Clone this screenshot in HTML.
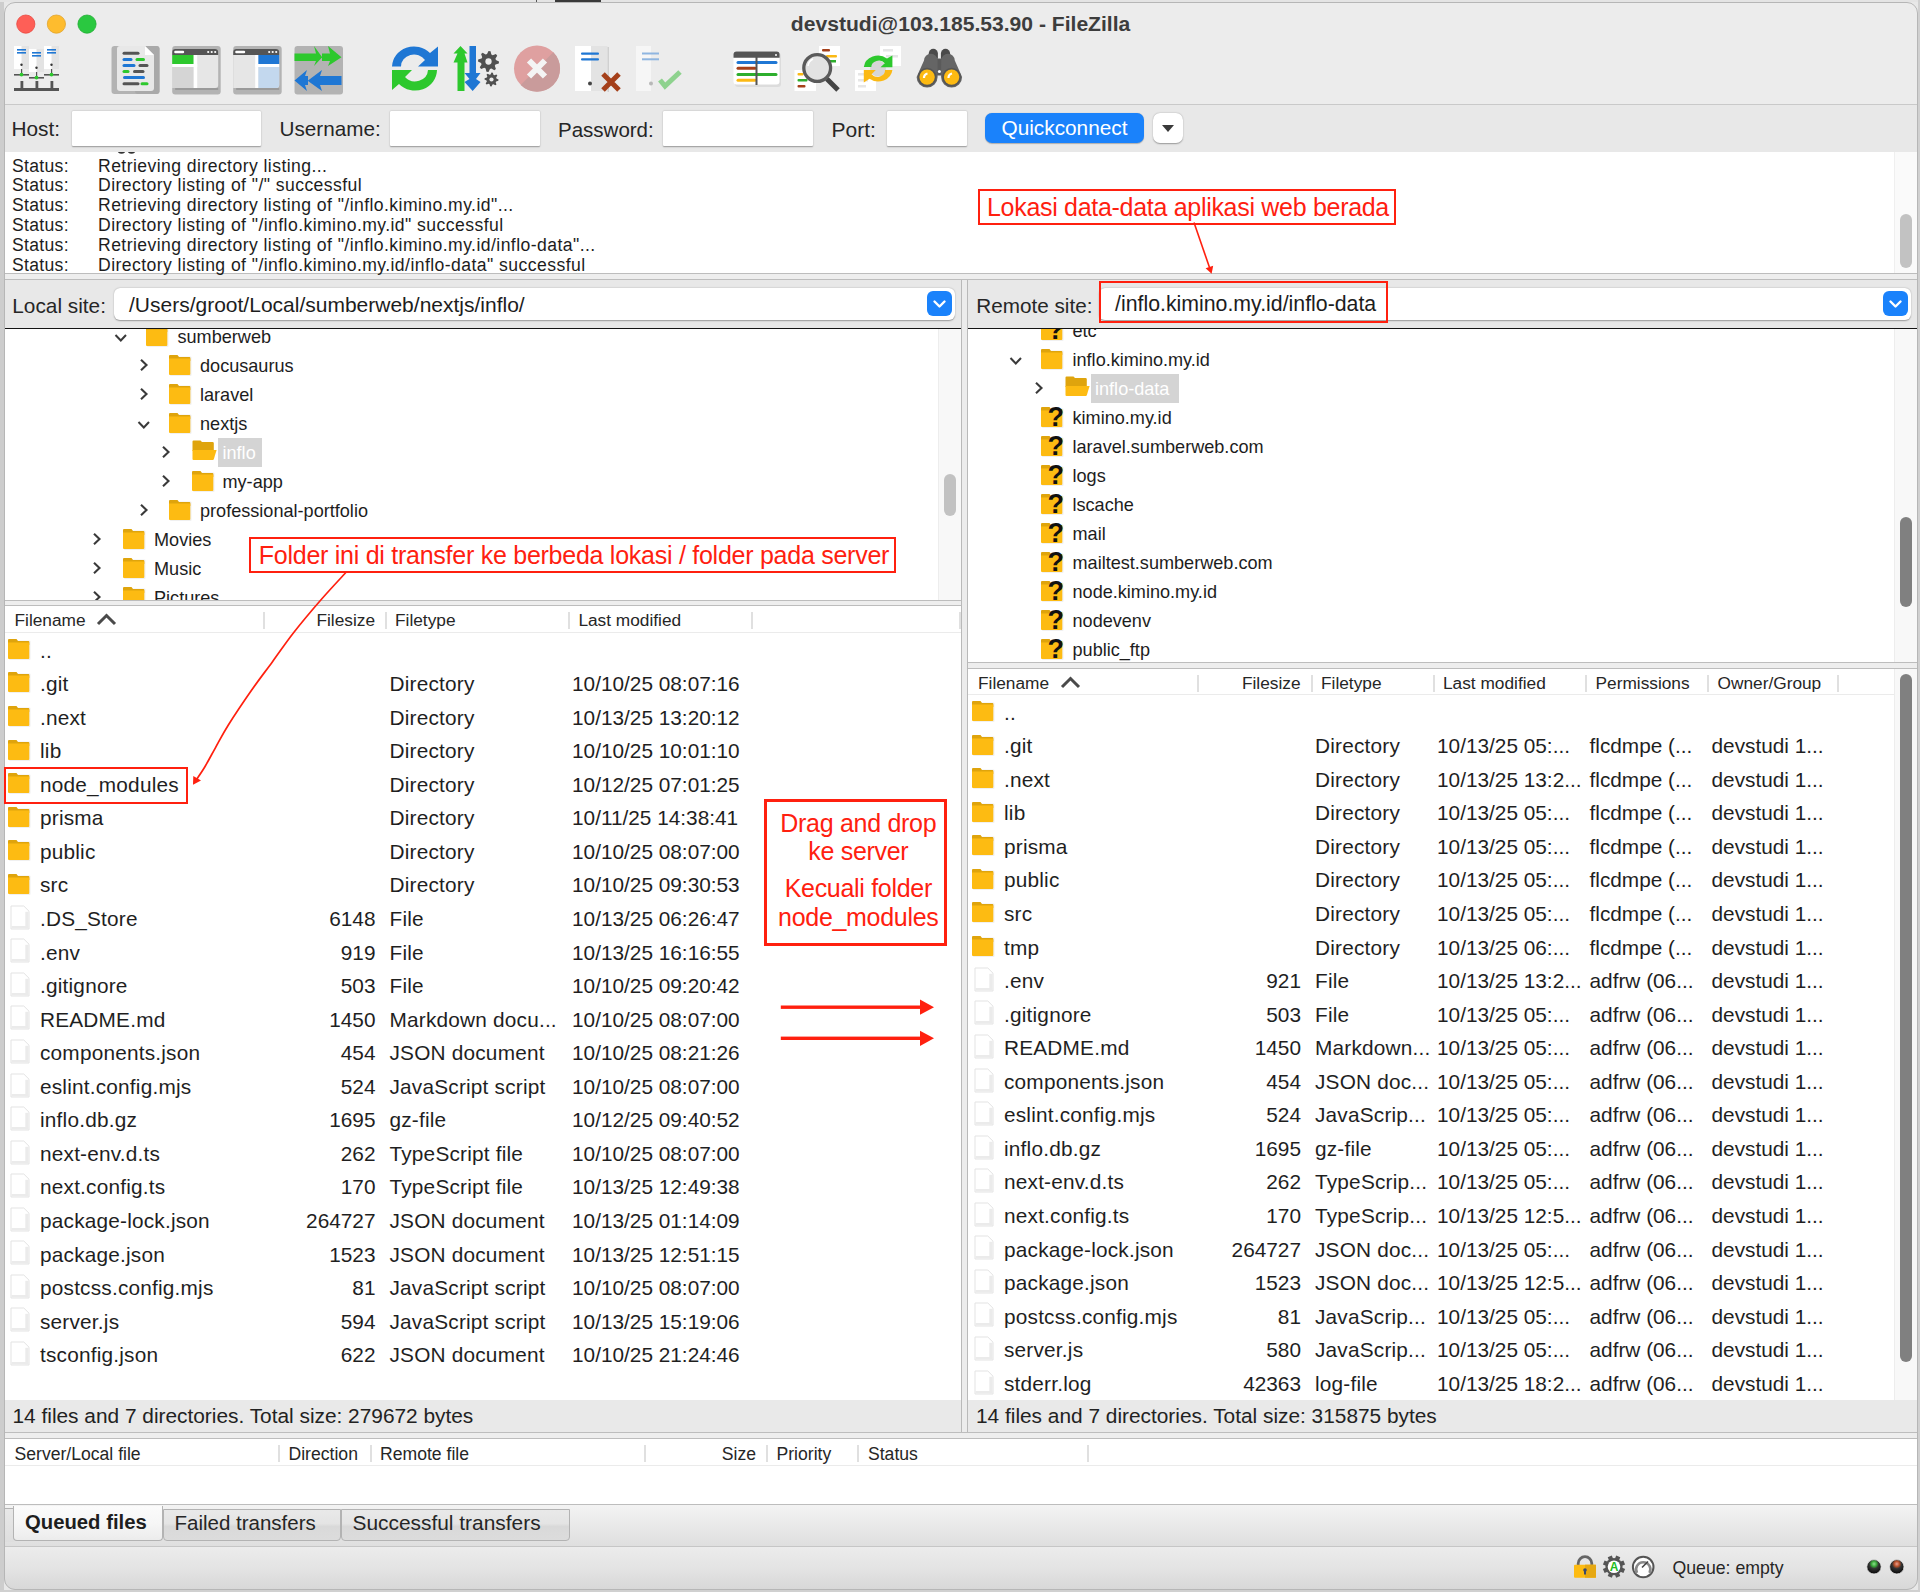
<!DOCTYPE html>
<html><head><meta charset="utf-8"><title>FileZilla</title>
<style>
html,body{margin:0;padding:0}
body{width:1920px;height:1592px;position:relative;overflow:hidden;background:#e9e9e9;font-family:"Liberation Sans", sans-serif;}
div,svg{box-sizing:border-box}
</style></head><body>
<div style="position:absolute;left:0px;top:0px;width:1920px;height:1592px;background:#ebebeb"></div><div style="position:absolute;left:4px;top:2px;width:1914px;height:1588px;border-radius:11px;overflow:hidden;background:#ececec"><div style="position:absolute;left:-4px;top:-2px;width:1920px;height:1592px"><div style="position:absolute;left:0px;top:0px;width:1920px;height:104px;background:#ececec"></div><div style="position:absolute;left:0px;top:104px;width:1920px;height:1px;background:#c9c9c9"></div><div style="position:absolute;left:0px;top:105px;width:1920px;height:47px;background:#e8e8e8"></div><div style="position:absolute;left:5px;top:152px;width:1912px;height:121px;background:#fff"></div><div style="position:absolute;left:1894px;top:152px;width:23px;height:121px;background:#fafafa;border-left:1px solid #efefef"></div><div style="position:absolute;left:1900px;top:214px;width:12px;height:54px;background:#c2c2c2;border-radius:6px"></div><div style="position:absolute;left:0px;top:273px;width:1920px;height:1px;background:#bdbdbd"></div><div style="position:absolute;left:0px;top:274px;width:1920px;height:5px;background:#eeeeee"></div><div style="position:absolute;left:0px;top:279px;width:1920px;height:1px;background:#bdbdbd"></div><div style="position:absolute;left:0px;top:280px;width:1920px;height:48px;background:#e8e8e8"></div><div style="position:absolute;left:0px;top:328px;width:1920px;height:1px;background:#141414"></div><div style="position:absolute;left:961px;top:280px;width:1px;height:1152px;background:#b9b9b9"></div><div style="position:absolute;left:962px;top:280px;width:5px;height:1152px;background:#ececec"></div><div style="position:absolute;left:967px;top:280px;width:1px;height:1152px;background:#b9b9b9"></div><div style="position:absolute;left:5px;top:329px;width:956px;height:271px;background:#fff"></div><div style="position:absolute;left:938px;top:329px;width:23px;height:271px;background:#f8f8f8;border-left:1px solid #ededed"></div><div style="position:absolute;left:944px;top:474px;width:12px;height:42px;background:#c2c2c2;border-radius:6px"></div><div style="position:absolute;left:0px;top:600px;width:961px;height:1px;background:#bdbdbd"></div><div style="position:absolute;left:0px;top:601px;width:961px;height:4px;background:#eeeeee"></div><div style="position:absolute;left:0px;top:605px;width:961px;height:1px;background:#bdbdbd"></div><div style="position:absolute;left:5px;top:606px;width:956px;height:794px;background:#fff"></div><div style="position:absolute;left:5px;top:632px;width:956px;height:1px;background:#ebebeb"></div><div style="position:absolute;left:5px;top:1400px;width:956px;height:32px;background:#e9e9e9"></div><div style="position:absolute;left:968px;top:329px;width:949px;height:333px;background:#fff"></div><div style="position:absolute;left:1894px;top:329px;width:23px;height:333px;background:#f8f8f8;border-left:1px solid #ededed"></div><div style="position:absolute;left:1900px;top:517px;width:12px;height:90px;background:#808080;border-radius:6px"></div><div style="position:absolute;left:968px;top:662px;width:949px;height:1px;background:#bdbdbd"></div><div style="position:absolute;left:968px;top:663px;width:949px;height:5px;background:#eeeeee"></div><div style="position:absolute;left:968px;top:668px;width:949px;height:1px;background:#bdbdbd"></div><div style="position:absolute;left:968px;top:669px;width:949px;height:731px;background:#fff"></div><div style="position:absolute;left:968px;top:694px;width:926px;height:1px;background:#ebebeb"></div><div style="position:absolute;left:1894px;top:669px;width:23px;height:731px;background:#f8f8f8;border-left:1px solid #ededed"></div><div style="position:absolute;left:1900px;top:674px;width:12px;height:688px;background:#808080;border-radius:6px"></div><div style="position:absolute;left:968px;top:1400px;width:949px;height:32px;background:#e9e9e9"></div><div style="position:absolute;left:0px;top:1432px;width:1920px;height:1px;background:#bdbdbd"></div><div style="position:absolute;left:0px;top:1433px;width:1920px;height:5px;background:#eeeeee"></div><div style="position:absolute;left:0px;top:1438px;width:1920px;height:1px;background:#bdbdbd"></div><div style="position:absolute;left:5px;top:1439px;width:1912px;height:65px;background:#fff"></div><div style="position:absolute;left:5px;top:1465px;width:1912px;height:1px;background:#ebebeb"></div><div style="position:absolute;left:0px;top:1504px;width:1920px;height:1px;background:#bdbdbd"></div><div style="position:absolute;left:0px;top:1505px;width:1920px;height:42px;background:linear-gradient(#f4f4f4,#e9e9e9 30%,#dcdcdc)"></div><div style="position:absolute;left:0px;top:1546px;width:1920px;height:1px;background:#c4c4c4"></div><div style="position:absolute;left:0px;top:1547px;width:1920px;height:45px;background:linear-gradient(#ececec,#e3e3e3 50%,#d6d6d6)"></div></div></div><svg style="position:absolute;left:0px;top:0px" width="120" height="48" viewBox="0 0 120 48">
<circle cx="25.8" cy="24.1" r="9.1" fill="#fe5f57" stroke="#e9483f" stroke-width="0.8"/>
<circle cx="56.4" cy="24.1" r="9.1" fill="#febc2e" stroke="#e1a32a" stroke-width="0.8"/>
<circle cx="87.0" cy="24.1" r="9.1" fill="#2ac840" stroke="#22ad35" stroke-width="0.8"/>
</svg><div style="position:absolute;left:460.6px;width:1000px;top:11.04px;height:25.32px;line-height:25.32px;font-size:21.1px;color:#3d3d3d;font-weight:bold;white-space:pre;text-align:center;">devstudi@103.185.53.90 - FileZilla</div><svg style="position:absolute;left:0;top:0" width="1000" height="104" viewBox="0 0 1000 104"><rect x="14" y="46" width="15" height="23" fill="#ffffff"/><rect x="21.5" y="46" width="7.5" height="23" fill="#e3e3e3"/><rect x="17" y="49" width="9" height="1.6" fill="#1f77d4"/><rect x="17" y="52" width="9" height="1.6" fill="#1f77d4"/><circle cx="21.5" cy="64.7" r="1.2" fill="#333"/><rect x="21" y="69" width="1.2" height="5" fill="#555"/><rect x="14" y="74" width="15" height="1.6" fill="#555"/><circle cx="21.5" cy="74.6" r="1.9" fill="#2dc82d"/><rect x="29" y="49" width="15" height="23" fill="#ffffff"/><rect x="36.5" y="49" width="7.5" height="23" fill="#e3e3e3"/><rect x="32" y="52" width="9" height="1.6" fill="#1f77d4"/><rect x="32" y="55" width="9" height="1.6" fill="#1f77d4"/><circle cx="36.5" cy="67.7" r="1.2" fill="#333"/><rect x="36" y="72" width="1.2" height="5" fill="#555"/><rect x="29" y="77" width="15" height="1.6" fill="#555"/><circle cx="36.5" cy="77.6" r="1.9" fill="#2dc82d"/><rect x="44" y="46" width="15" height="23" fill="#ffffff"/><rect x="51.5" y="46" width="7.5" height="23" fill="#e3e3e3"/><rect x="47" y="49" width="9" height="1.6" fill="#1f77d4"/><rect x="47" y="52" width="9" height="1.6" fill="#1f77d4"/><circle cx="51.5" cy="64.7" r="1.2" fill="#333"/><rect x="51" y="69" width="1.2" height="5" fill="#555"/><rect x="44" y="74" width="15" height="1.6" fill="#555"/><circle cx="51.5" cy="74.6" r="1.9" fill="#2dc82d"/><rect x="20.5" y="81" width="2.8" height="8" fill="#555"/><rect x="35.5" y="81" width="2.8" height="8" fill="#555"/><rect x="50.5" y="81" width="2.8" height="8" fill="#555"/><rect x="14" y="88" width="45" height="3" fill="#555"/><rect x="111.5" y="46" width="48" height="48" rx="3" fill="#b3b3b3"/><rect x="135" y="46" width="24.5" height="48" rx="3" fill="#a9a9a9"/><path d="M117 49 Q117 46 120 46 L145 46 L154 55 L154 88 Q154 91 151 91 L120 91 Q117 91 117 88 Z" fill="#e8e8e8"/><path d="M145 46 L154 55 L145 55 Z" fill="#ffffff"/><line x1="124" y1="53.3" x2="138" y2="53.3" stroke="#555" stroke-width="3" stroke-linecap="round"/><line x1="124" y1="59.5" x2="131" y2="59.5" stroke="#1f77d4" stroke-width="3" stroke-linecap="round"/><line x1="137" y1="59.5" x2="143.5" y2="59.5" stroke="#2dc82d" stroke-width="3" stroke-linecap="round"/><line x1="124" y1="65.5" x2="134" y2="65.5" stroke="#1f77d4" stroke-width="3" stroke-linecap="round"/><line x1="140" y1="65.5" x2="147" y2="65.5" stroke="#555" stroke-width="3" stroke-linecap="round"/><line x1="124" y1="71.5" x2="128" y2="71.5" stroke="#2dc82d" stroke-width="3" stroke-linecap="round"/><line x1="134.5" y1="71.5" x2="143" y2="71.5" stroke="#555" stroke-width="3" stroke-linecap="round"/><line x1="124.5" y1="77.5" x2="143.5" y2="77.5" stroke="#1f77d4" stroke-width="3" stroke-linecap="round"/><line x1="124" y1="83.8" x2="138" y2="83.8" stroke="#555" stroke-width="3" stroke-linecap="round"/><line x1="142" y1="83.8" x2="147" y2="83.8" stroke="#2dc82d" stroke-width="3" stroke-linecap="round"/><rect x="172.2" y="46" width="48.5" height="48.5" rx="3" fill="#b3b3b3"/><path d="M172.2 52 Q172.2 49 175.2 49 L215.2 49 Q218.2 49 218.2 52 L218.2 85 Q218.2 88 215.2 88 L172.2 88 Z" fill="#e6e6e6"/><path d="M172.2 52 Q172.2 49 175.2 49 L215.2 49 Q218.2 49 218.2 52 L218.2 55 L172.2 55 Z" fill="#555"/><rect x="174.2" y="50.8" width="10" height="2.4" rx="1.2" fill="#fff"/><circle cx="208.2" cy="52" r="1.1" fill="#fff"/><circle cx="211.7" cy="52" r="1.1" fill="#fff"/><circle cx="215.2" cy="52" r="1.1" fill="#fff"/><rect x="172.2" y="55" width="21.5" height="9" fill="#2dc82d"/><rect x="172.2" y="64" width="25" height="3" fill="#fff"/><rect x="172.2" y="67" width="21.5" height="21" fill="#d5d5d5"/><rect x="193.7" y="55" width="3.5" height="33" fill="#fff"/><rect x="175.2" y="88" width="43" height="2" fill="#9a9a9a"/><rect x="233.2" y="46" width="48.5" height="48.5" rx="3" fill="#b3b3b3"/><path d="M233.2 52 Q233.2 49 236.2 49 L276.2 49 Q279.2 49 279.2 52 L279.2 85 Q279.2 88 276.2 88 L233.2 88 Z" fill="#e6e6e6"/><path d="M233.2 52 Q233.2 49 236.2 49 L276.2 49 Q279.2 49 279.2 52 L279.2 55 L233.2 55 Z" fill="#555"/><rect x="235.2" y="50.8" width="10" height="2.4" rx="1.2" fill="#fff"/><circle cx="269.2" cy="52" r="1.1" fill="#fff"/><circle cx="272.7" cy="52" r="1.1" fill="#fff"/><circle cx="276.2" cy="52" r="1.1" fill="#fff"/><rect x="258.2" y="55" width="21" height="9" fill="#1f77d4"/><rect x="255.2" y="64" width="24" height="3" fill="#fff"/><path d="M258.2 67 L279.2 67 L279.2 85 Q279.2 88 276.2 88 L258.2 88 Z" fill="#c3d8ee"/><rect x="255.2" y="55" width="3" height="33" fill="#fff"/><rect x="236.2" y="88" width="43" height="2" fill="#9a9a9a"/><rect x="294.5" y="46" width="48.5" height="48.5" rx="3" fill="#b3b3b3"/><path d="M294.5 53.5 L316 53.5 L314 46 L322 57 L322 53.5 L330 53.5 L328 46 L341.5 57.2 L328 66 L330 61 L322 61 L322 57.5 L314 66 L316 61 L294.5 61 Z" fill="#2dc82d"/><path d="M341.5 76 L320 76 L322 70 L308 80.5 L308 76 L305 76 L307 70 L294.5 80.5 L307 91 L305 85 L308 85 L308 81 L322 91 L320 85 L341.5 85 Z" fill="#1f77d4"/><path d="M392 66.5 A22 21 0 0 1 430 53 L438 46.5 L438 66.5 L418 66.5 L425 60 A13 12 0 0 0 401 66.5 Z" fill="#1f77d4"/><path d="M437 70 A22 21 0 0 1 399 84 L392 90 L392 70 L412 70 L405 77 A13 12 0 0 0 428 70 Z" fill="#2dc82d"/><path d="M460.5 46 L467.5 53.5 L464.5 53.5 L467.5 62.5 L464.5 62.5 L464.5 91 L457.5 91 L457.5 62.5 L453.5 62.5 L457.5 53.5 L453.5 53.5 Z" fill="#2dc82d"/><rect x="469.5" y="46" width="6.5" height="30" fill="#1f77d4"/><path d="M464.5 73 L480.5 73 L476 79 L480.5 82 L472.7 91 L464.5 82 L469.5 79 Z" fill="#1f77d4"/><polygon points="499.00,61.50 498.80,63.55 495.48,64.39 494.79,65.70 495.92,68.92 494.33,70.23 491.39,68.48 489.97,68.91 488.50,72.00 486.45,71.80 485.61,68.48 484.30,67.79 481.08,68.92 479.77,67.33 481.52,64.39 481.09,62.97 478.00,61.50 478.20,59.45 481.52,58.61 482.21,57.30 481.08,54.08 482.67,52.77 485.61,54.52 487.03,54.09 488.50,51.00 490.55,51.20 491.39,54.52 492.70,55.21 495.92,54.08 497.23,55.67 495.48,58.61 495.91,60.03" fill="#505050"/><circle cx="488.5" cy="61.5" r="3.15" fill="#ececec"/><polygon points="498.50,79.50 498.37,80.87 496.16,81.43 495.69,82.30 496.45,84.45 495.39,85.32 493.43,84.16 492.48,84.44 491.50,86.50 490.13,86.37 489.57,84.16 488.70,83.69 486.55,84.45 485.68,83.39 486.84,81.43 486.56,80.48 484.50,79.50 484.63,78.13 486.84,77.57 487.31,76.70 486.55,74.55 487.61,73.68 489.57,74.84 490.52,74.56 491.50,72.50 492.87,72.63 493.43,74.84 494.30,75.31 496.45,74.55 497.32,75.61 496.16,77.57 496.44,78.52" fill="#505050"/><circle cx="491.5" cy="79.5" r="2.10" fill="#ececec"/><circle cx="537" cy="68.6" r="23" fill="#dfa0a0"/><path d="M553.3 52.3 A23 23 0 0 1 520.7 84.9 Z" fill="#c99b9b"/><path d="M529 60.5 L545 76.5 M545 60.5 L529 76.5" stroke="#f4f4f4" stroke-width="6" stroke-linecap="butt"/><rect x="575" y="46" width="16" height="45" fill="#fff"/><rect x="591" y="46" width="16.5" height="45" fill="#e3e3e3"/><rect x="607.5" y="47" width="1.5" height="45" fill="#d0d0d0"/><rect x="581" y="52.5" width="18" height="2.2" rx="1" fill="#1f77d4"/><rect x="581" y="58.3" width="18" height="2.2" rx="1" fill="#1f77d4"/><circle cx="590" cy="83.5" r="2" fill="#444"/><path d="M603 74 L619 90 M619 74 L603 90" stroke="#a5401a" stroke-width="5"/><rect x="636" y="46" width="15" height="45" fill="#f6f6f6"/><rect x="651" y="46" width="16" height="45" fill="#ececec"/><rect x="642" y="52.5" width="17" height="2" fill="#8fb5e0"/><rect x="642" y="58.3" width="17" height="2" fill="#8fb5e0"/><circle cx="651" cy="83.5" r="2" fill="#b8b8b8"/><path d="M660 80 L665 86 L680 72" stroke="#8ed28e" stroke-width="5" fill="none"/><rect x="735" y="53" width="46" height="34" rx="3" fill="#dcdcdc"/><rect x="733.5" y="51.6" width="46" height="33" rx="3" fill="#fff"/><path d="M733.5 57.7 L733.5 54.6 Q733.5 51.6 736.5 51.6 L776.6 51.6 Q779.6 51.6 779.6 54.6 L779.6 57.7 Z" fill="#555"/><circle cx="776" cy="55" r="1" fill="#fff"/><line x1="738" y1="62.4" x2="776" y2="62.4" stroke="#1f77d4" stroke-width="3" stroke-linecap="round"/><line x1="738" y1="68.3" x2="755" y2="68.3" stroke="#a5401a" stroke-width="3" stroke-linecap="round"/><line x1="738" y1="74.5" x2="776" y2="74.5" stroke="#2dae2d" stroke-width="3" stroke-linecap="round"/><line x1="738" y1="80.3" x2="755" y2="80.3" stroke="#fbb914" stroke-width="3" stroke-linecap="round"/><rect x="755.5" y="57" width="2" height="28" fill="#555"/><rect x="819" y="46" width="21" height="20" fill="#fff"/><rect x="822" y="49" width="8" height="2.5" rx="1" fill="#a5401a"/><rect x="826" y="55" width="11" height="2.5" rx="1" fill="#fbb914"/><rect x="830" y="60" width="6" height="2.5" fill="#2dae2d"/><rect x="794.5" y="70" width="21.5" height="21" fill="#fff"/><rect x="797.5" y="73" width="6" height="2.5" rx="1" fill="#fbb914"/><rect x="797.5" y="79" width="10" height="2.5" rx="1" fill="#2dae2d"/><rect x="797.5" y="85" width="8" height="2.5" rx="1" fill="#a5401a"/><circle cx="817.2" cy="68" r="13.4" fill="#e2e2e2" stroke="#5a5a5a" stroke-width="3.3"/><path d="M808 66 A9 9 0 0 1 813 59" stroke="#fff" stroke-width="1.5" fill="none"/><line x1="827" y1="79" x2="838" y2="90" stroke="#444" stroke-width="5"/><rect x="880" y="46" width="21" height="20" fill="#fff"/><rect x="883" y="49" width="10" height="2.5" fill="#e6e6e6"/><rect x="886" y="55" width="12" height="2.5" fill="#e6e6e6"/><rect x="855" y="70" width="21" height="21" fill="#fff"/><rect x="858" y="73" width="7" height="2.5" fill="#e6e6e6"/><rect x="858" y="79" width="10" height="2.5" fill="#e6e6e6"/><rect x="858" y="85" width="8" height="2.5" fill="#e6e6e6"/><circle cx="878" cy="68.5" r="8" fill="#d6d6d6"/><path d="M863.8 67 A14.3 13 0 0 1 887 58.5 L892.4 55.5 L892.4 67.3 L880.5 67.3 L884.8 63.2 A7.5 6.5 0 0 0 871.3 67 Z" fill="#2dc82d"/><path d="M892.4 70 A14.3 13 0 0 1 869.5 78.8 L863.8 82.5 L863.8 70 L875.8 70 L871.6 74.3 A7.5 6.5 0 0 0 885 70 Z" fill="#fbb914"/><rect x="928.7" y="48.8" width="9.2" height="13" rx="4.6" fill="#4a4a4a"/><rect x="940.9" y="48.8" width="9.2" height="13" rx="4.6" fill="#4a4a4a"/><rect x="936" y="58.5" width="7" height="17" fill="#5a5a5a"/><path d="M924 60.5 A6.8 6.8 0 0 1 937.6 60.5 L937.6 77.1 A10.5 10.5 0 0 1 916.6 77.1 Z" fill="#656565"/><path d="M941.2 60.5 A6.8 6.8 0 0 1 954.8 60.5 L962.1 77.1 A10.5 10.5 0 0 1 941.1 77.1 Z" fill="#656565"/><circle cx="927.1" cy="77.1" r="9.3" fill="#555"/><circle cx="951.6" cy="77.1" r="9.3" fill="#555"/><circle cx="927.1" cy="77.1" r="7.7" fill="#fdba12"/><circle cx="951.6" cy="77.1" r="7.7" fill="#fdba12"/><circle cx="939.4" cy="71.5" r="1.5" fill="#fff"/><path d="M924 78 A4.5 4.5 0 0 1 927.5 73.5" stroke="#fff" stroke-width="2.2" fill="none"/><path d="M948.5 78 A4.5 4.5 0 0 1 952 73.5" stroke="#fff" stroke-width="2.2" fill="none"/></svg><div style="position:absolute;left:11.5px;top:117.32px;height:24.96px;line-height:24.96px;font-size:20.8px;color:#262626;font-weight:normal;white-space:pre;">Host:</div><div style="position:absolute;left:72px;top:111px;width:189px;height:35px;background:#fff;box-shadow:0 0.5px 1.5px rgba(0,0,0,0.35);border-radius:1px"></div><div style="position:absolute;left:279.5px;top:117.38px;height:24.84px;line-height:24.84px;font-size:20.7px;color:#262626;font-weight:normal;white-space:pre;">Username:</div><div style="position:absolute;left:390px;top:111px;width:150px;height:35px;background:#fff;box-shadow:0 0.5px 1.5px rgba(0,0,0,0.35);border-radius:1px"></div><div style="position:absolute;left:558px;top:117.50px;height:24.60px;line-height:24.60px;font-size:20.5px;color:#262626;font-weight:normal;white-space:pre;">Password:</div><div style="position:absolute;left:663px;top:111px;width:150px;height:35px;background:#fff;box-shadow:0 0.5px 1.5px rgba(0,0,0,0.35);border-radius:1px"></div><div style="position:absolute;left:831.5px;top:117.20px;height:25.20px;line-height:25.20px;font-size:21px;color:#262626;font-weight:normal;white-space:pre;">Port:</div><div style="position:absolute;left:887px;top:111px;width:80px;height:35px;background:#fff;box-shadow:0 0.5px 1.5px rgba(0,0,0,0.35);border-radius:1px"></div><div style="position:absolute;left:985px;top:113px;width:159px;height:30px;background:#1a82fb;border-radius:7px;box-shadow:0 0.5px 1px rgba(0,0,0,0.25)"></div><div style="position:absolute;left:564.5px;width:1000px;top:115.72px;height:24.96px;line-height:24.96px;font-size:20.8px;color:#ffffff;font-weight:normal;white-space:pre;text-align:center;">Quickconnect</div><div style="position:absolute;left:1153px;top:113px;width:30px;height:30px;background:#fff;border-radius:7px;box-shadow:0 0.5px 1.5px rgba(0,0,0,0.35)"></div><svg style="position:absolute;left:1159px;top:123px" width="18" height="12" viewBox="0 0 18 12"><path d="M3 2 L15 2 L9 9 Z" fill="#3a3a3a"/></svg><div style="position:absolute;left:12px;top:155.54px;height:21.12px;line-height:21.12px;font-size:17.6px;color:#1d1d1d;font-weight:normal;white-space:pre;letter-spacing:0.3px">Status:</div><div style="position:absolute;left:98px;top:155.54px;height:21.12px;line-height:21.12px;font-size:17.6px;color:#1d1d1d;font-weight:normal;white-space:pre;letter-spacing:0.43px">Retrieving directory listing...</div><div style="position:absolute;left:12px;top:175.46px;height:21.12px;line-height:21.12px;font-size:17.6px;color:#1d1d1d;font-weight:normal;white-space:pre;letter-spacing:0.3px">Status:</div><div style="position:absolute;left:98px;top:175.46px;height:21.12px;line-height:21.12px;font-size:17.6px;color:#1d1d1d;font-weight:normal;white-space:pre;letter-spacing:0.43px">Directory listing of &quot;/&quot; successful</div><div style="position:absolute;left:12px;top:195.38px;height:21.12px;line-height:21.12px;font-size:17.6px;color:#1d1d1d;font-weight:normal;white-space:pre;letter-spacing:0.3px">Status:</div><div style="position:absolute;left:98px;top:195.38px;height:21.12px;line-height:21.12px;font-size:17.6px;color:#1d1d1d;font-weight:normal;white-space:pre;letter-spacing:0.43px">Retrieving directory listing of &quot;/inflo.kimino.my.id&quot;...</div><div style="position:absolute;left:12px;top:215.30px;height:21.12px;line-height:21.12px;font-size:17.6px;color:#1d1d1d;font-weight:normal;white-space:pre;letter-spacing:0.3px">Status:</div><div style="position:absolute;left:98px;top:215.30px;height:21.12px;line-height:21.12px;font-size:17.6px;color:#1d1d1d;font-weight:normal;white-space:pre;letter-spacing:0.43px">Directory listing of &quot;/inflo.kimino.my.id&quot; successful</div><div style="position:absolute;left:12px;top:235.22px;height:21.12px;line-height:21.12px;font-size:17.6px;color:#1d1d1d;font-weight:normal;white-space:pre;letter-spacing:0.3px">Status:</div><div style="position:absolute;left:98px;top:235.22px;height:21.12px;line-height:21.12px;font-size:17.6px;color:#1d1d1d;font-weight:normal;white-space:pre;letter-spacing:0.43px">Retrieving directory listing of &quot;/inflo.kimino.my.id/inflo-data&quot;...</div><div style="position:absolute;left:12px;top:255.14px;height:21.12px;line-height:21.12px;font-size:17.6px;color:#1d1d1d;font-weight:normal;white-space:pre;letter-spacing:0.3px">Status:</div><div style="position:absolute;left:98px;top:255.14px;height:21.12px;line-height:21.12px;font-size:17.6px;color:#1d1d1d;font-weight:normal;white-space:pre;letter-spacing:0.43px">Directory listing of &quot;/inflo.kimino.my.id/inflo-data&quot; successful</div><svg style="position:absolute;left:116px;top:150px" width="24" height="6" viewBox="0 0 24 6"><path d="M2.5 1.5 Q5.5 4.2 8.5 1.5" stroke="#333" stroke-width="1.8" fill="none"/><path d="M12.5 1.5 Q15.5 4.2 18.5 1.5" stroke="#333" stroke-width="1.8" fill="none"/></svg><div style="position:absolute;left:110px;top:148px;width:40px;height:4px;background:#e8e8e8"></div><div style="position:absolute;left:12.3px;top:293.92px;height:24.96px;line-height:24.96px;font-size:20.8px;color:#262626;font-weight:normal;white-space:pre;">Local site:</div><div style="position:absolute;left:114px;top:288px;width:841px;height:32px;background:#fff;border-radius:6px;box-shadow:0 0.5px 1.5px rgba(0,0,0,0.35)"></div><div style="position:absolute;left:129px;top:292.10px;height:25.20px;line-height:25.20px;font-size:21px;color:#1d1d1d;font-weight:normal;white-space:pre;">/Users/groot/Local/sumberweb/nextjs/inflo/</div><div style="position:absolute;left:927px;top:291px;width:25px;height:25px;background:#1a82fb;border-radius:6px"></div><svg style="position:absolute;left:927px;top:291px" width="25" height="25" viewBox="0 0 25 25"><path d="M7.5 10.5 L12.5 15.5 L17.5 10.5" stroke="#fff" stroke-width="2.4" fill="none" stroke-linecap="round" stroke-linejoin="round"/></svg><div style="position:absolute;left:976.3px;top:293.98px;height:24.84px;line-height:24.84px;font-size:20.7px;color:#262626;font-weight:normal;white-space:pre;">Remote site:</div><div style="position:absolute;left:1099px;top:288px;width:812px;height:32px;background:#fff;border-radius:6px;box-shadow:0 0.5px 1.5px rgba(0,0,0,0.35)"></div><div style="position:absolute;left:1115px;top:291.92px;height:25.56px;line-height:25.56px;font-size:21.3px;color:#1d1d1d;font-weight:normal;white-space:pre;">/inflo.kimino.my.id/inflo-data</div><div style="position:absolute;left:1883px;top:291px;width:25px;height:25px;background:#1a82fb;border-radius:6px"></div><svg style="position:absolute;left:1883px;top:291px" width="25" height="25" viewBox="0 0 25 25"><path d="M7.5 10.5 L12.5 15.5 L17.5 10.5" stroke="#fff" stroke-width="2.4" fill="none" stroke-linecap="round" stroke-linejoin="round"/></svg><div style="position:absolute;left:5px;top:329px;width:933px;height:271px;overflow:hidden"><div style="position:absolute;left:-5px;top:-329px;width:1920px;height:1592px"><svg style="position:absolute;left:114px;top:332.8px" width="14" height="10" viewBox="0 0 14 10"><path d="M1.5 2 L6.8 7.5 L12 2" stroke="#3a3a3a" stroke-width="2" fill="none"/></svg><svg style="position:absolute;left:146px;top:326.3px;overflow:visible" width="24" height="22" viewBox="0 0 24 22"><rect x="1" y="1.5" width="21.5" height="19.5" rx="1" fill="#e3e3e3" opacity="0.55"/><path d="M0 1 Q0 0 1 0 L8.5 0 L10 2 L20.5 2 Q21.3 2 21.3 3 L21.3 6 L0 6 Z" fill="#dfa40c"/><path d="M0 3.5 L21.3 3.5 L21.3 19 Q21.3 20 20.3 20 L1 20 Q0 20 0 19 Z" fill="#fdbb12"/></svg><div style="position:absolute;left:177.5px;top:327.14px;height:21.72px;line-height:21.72px;font-size:18.1px;color:#1d1d1d;font-weight:normal;white-space:pre;">sumberweb</div><svg style="position:absolute;left:138.7px;top:358.0px" width="10" height="14" viewBox="0 0 10 14"><path d="M2 1.8 L7.5 7 L2 12.2" stroke="#3a3a3a" stroke-width="2.1" fill="none"/></svg><svg style="position:absolute;left:169px;top:355.3px;overflow:visible" width="24" height="22" viewBox="0 0 24 22"><rect x="1" y="1.5" width="21.5" height="19.5" rx="1" fill="#e3e3e3" opacity="0.55"/><path d="M0 1 Q0 0 1 0 L8.5 0 L10 2 L20.5 2 Q21.3 2 21.3 3 L21.3 6 L0 6 Z" fill="#dfa40c"/><path d="M0 3.5 L21.3 3.5 L21.3 19 Q21.3 20 20.3 20 L1 20 Q0 20 0 19 Z" fill="#fdbb12"/></svg><div style="position:absolute;left:200px;top:356.14px;height:21.72px;line-height:21.72px;font-size:18.1px;color:#1d1d1d;font-weight:normal;white-space:pre;">docusaurus</div><svg style="position:absolute;left:138.7px;top:387.0px" width="10" height="14" viewBox="0 0 10 14"><path d="M2 1.8 L7.5 7 L2 12.2" stroke="#3a3a3a" stroke-width="2.1" fill="none"/></svg><svg style="position:absolute;left:169px;top:384.3px;overflow:visible" width="24" height="22" viewBox="0 0 24 22"><rect x="1" y="1.5" width="21.5" height="19.5" rx="1" fill="#e3e3e3" opacity="0.55"/><path d="M0 1 Q0 0 1 0 L8.5 0 L10 2 L20.5 2 Q21.3 2 21.3 3 L21.3 6 L0 6 Z" fill="#dfa40c"/><path d="M0 3.5 L21.3 3.5 L21.3 19 Q21.3 20 20.3 20 L1 20 Q0 20 0 19 Z" fill="#fdbb12"/></svg><div style="position:absolute;left:200px;top:385.14px;height:21.72px;line-height:21.72px;font-size:18.1px;color:#1d1d1d;font-weight:normal;white-space:pre;">laravel</div><svg style="position:absolute;left:137px;top:419.8px" width="14" height="10" viewBox="0 0 14 10"><path d="M1.5 2 L6.8 7.5 L12 2" stroke="#3a3a3a" stroke-width="2" fill="none"/></svg><svg style="position:absolute;left:169px;top:413.3px;overflow:visible" width="24" height="22" viewBox="0 0 24 22"><rect x="1" y="1.5" width="21.5" height="19.5" rx="1" fill="#e3e3e3" opacity="0.55"/><path d="M0 1 Q0 0 1 0 L8.5 0 L10 2 L20.5 2 Q21.3 2 21.3 3 L21.3 6 L0 6 Z" fill="#dfa40c"/><path d="M0 3.5 L21.3 3.5 L21.3 19 Q21.3 20 20.3 20 L1 20 Q0 20 0 19 Z" fill="#fdbb12"/></svg><div style="position:absolute;left:200px;top:414.14px;height:21.72px;line-height:21.72px;font-size:18.1px;color:#1d1d1d;font-weight:normal;white-space:pre;">nextjs</div><svg style="position:absolute;left:160.7px;top:445.0px" width="10" height="14" viewBox="0 0 10 14"><path d="M2 1.8 L7.5 7 L2 12.2" stroke="#3a3a3a" stroke-width="2.1" fill="none"/></svg><svg style="position:absolute;left:192px;top:440.3px" width="25" height="21" viewBox="0 0 25 21"><path d="M0.5 1.5 Q0.5 0.5 1.5 0.5 L8.5 0.5 L10 2 L20.5 2 Q21.8 2 21.8 3.3 L21.8 11 L0.5 11 Z" fill="#dfa40d"/><path d="M0.5 10 L24.6 10 L21.8 19.3 Q21.5 20 20.8 20 L1.5 20 Q0.5 20 0.5 19 Z" fill="#fdbb12"/></svg><div style="position:absolute;left:218px;top:438.3px;width:44px;height:28.5px;background:#d4d4d4"></div><div style="position:absolute;left:222.5px;top:443.14px;height:21.72px;line-height:21.72px;font-size:18.1px;color:#ffffff;font-weight:normal;white-space:pre;">inflo</div><svg style="position:absolute;left:160.7px;top:474.0px" width="10" height="14" viewBox="0 0 10 14"><path d="M2 1.8 L7.5 7 L2 12.2" stroke="#3a3a3a" stroke-width="2.1" fill="none"/></svg><svg style="position:absolute;left:192px;top:471.3px;overflow:visible" width="24" height="22" viewBox="0 0 24 22"><rect x="1" y="1.5" width="21.5" height="19.5" rx="1" fill="#e3e3e3" opacity="0.55"/><path d="M0 1 Q0 0 1 0 L8.5 0 L10 2 L20.5 2 Q21.3 2 21.3 3 L21.3 6 L0 6 Z" fill="#dfa40c"/><path d="M0 3.5 L21.3 3.5 L21.3 19 Q21.3 20 20.3 20 L1 20 Q0 20 0 19 Z" fill="#fdbb12"/></svg><div style="position:absolute;left:222.5px;top:472.14px;height:21.72px;line-height:21.72px;font-size:18.1px;color:#1d1d1d;font-weight:normal;white-space:pre;">my-app</div><svg style="position:absolute;left:138.7px;top:503.0px" width="10" height="14" viewBox="0 0 10 14"><path d="M2 1.8 L7.5 7 L2 12.2" stroke="#3a3a3a" stroke-width="2.1" fill="none"/></svg><svg style="position:absolute;left:169px;top:500.3px;overflow:visible" width="24" height="22" viewBox="0 0 24 22"><rect x="1" y="1.5" width="21.5" height="19.5" rx="1" fill="#e3e3e3" opacity="0.55"/><path d="M0 1 Q0 0 1 0 L8.5 0 L10 2 L20.5 2 Q21.3 2 21.3 3 L21.3 6 L0 6 Z" fill="#dfa40c"/><path d="M0 3.5 L21.3 3.5 L21.3 19 Q21.3 20 20.3 20 L1 20 Q0 20 0 19 Z" fill="#fdbb12"/></svg><div style="position:absolute;left:200px;top:501.14px;height:21.72px;line-height:21.72px;font-size:18.1px;color:#1d1d1d;font-weight:normal;white-space:pre;">professional-portfolio</div><svg style="position:absolute;left:92.2px;top:532.0px" width="10" height="14" viewBox="0 0 10 14"><path d="M2 1.8 L7.5 7 L2 12.2" stroke="#3a3a3a" stroke-width="2.1" fill="none"/></svg><svg style="position:absolute;left:123px;top:529.3px;overflow:visible" width="24" height="22" viewBox="0 0 24 22"><rect x="1" y="1.5" width="21.5" height="19.5" rx="1" fill="#e3e3e3" opacity="0.55"/><path d="M0 1 Q0 0 1 0 L8.5 0 L10 2 L20.5 2 Q21.3 2 21.3 3 L21.3 6 L0 6 Z" fill="#dfa40c"/><path d="M0 3.5 L21.3 3.5 L21.3 19 Q21.3 20 20.3 20 L1 20 Q0 20 0 19 Z" fill="#fdbb12"/></svg><div style="position:absolute;left:154px;top:530.14px;height:21.72px;line-height:21.72px;font-size:18.1px;color:#1d1d1d;font-weight:normal;white-space:pre;">Movies</div><svg style="position:absolute;left:92.2px;top:561.0px" width="10" height="14" viewBox="0 0 10 14"><path d="M2 1.8 L7.5 7 L2 12.2" stroke="#3a3a3a" stroke-width="2.1" fill="none"/></svg><svg style="position:absolute;left:123px;top:558.3px;overflow:visible" width="24" height="22" viewBox="0 0 24 22"><rect x="1" y="1.5" width="21.5" height="19.5" rx="1" fill="#e3e3e3" opacity="0.55"/><path d="M0 1 Q0 0 1 0 L8.5 0 L10 2 L20.5 2 Q21.3 2 21.3 3 L21.3 6 L0 6 Z" fill="#dfa40c"/><path d="M0 3.5 L21.3 3.5 L21.3 19 Q21.3 20 20.3 20 L1 20 Q0 20 0 19 Z" fill="#fdbb12"/></svg><div style="position:absolute;left:154px;top:559.14px;height:21.72px;line-height:21.72px;font-size:18.1px;color:#1d1d1d;font-weight:normal;white-space:pre;">Music</div><svg style="position:absolute;left:92.2px;top:590.0px" width="10" height="14" viewBox="0 0 10 14"><path d="M2 1.8 L7.5 7 L2 12.2" stroke="#3a3a3a" stroke-width="2.1" fill="none"/></svg><svg style="position:absolute;left:123px;top:587.3px;overflow:visible" width="24" height="22" viewBox="0 0 24 22"><rect x="1" y="1.5" width="21.5" height="19.5" rx="1" fill="#e3e3e3" opacity="0.55"/><path d="M0 1 Q0 0 1 0 L8.5 0 L10 2 L20.5 2 Q21.3 2 21.3 3 L21.3 6 L0 6 Z" fill="#dfa40c"/><path d="M0 3.5 L21.3 3.5 L21.3 19 Q21.3 20 20.3 20 L1 20 Q0 20 0 19 Z" fill="#fdbb12"/></svg><div style="position:absolute;left:154px;top:588.14px;height:21.72px;line-height:21.72px;font-size:18.1px;color:#1d1d1d;font-weight:normal;white-space:pre;">Pictures</div></div></div><div style="position:absolute;left:968px;top:329px;width:926px;height:333px;overflow:hidden"><div style="position:absolute;left:-968px;top:-329px;width:1920px;height:1592px"><svg style="position:absolute;left:1041px;top:320.1px;overflow:visible" width="24" height="22" viewBox="0 0 24 22"><rect x="1" y="1.5" width="21.5" height="19.5" rx="1" fill="#e3e3e3" opacity="0.55"/><path d="M0 1 Q0 0 1 0 L8.5 0 L10 2 L20.5 2 Q21.3 2 21.3 3 L21.3 6 L0 6 Z" fill="#dfa40c"/><path d="M0 3.5 L21.3 3.5 L21.3 19 Q21.3 20 20.3 20 L1 20 Q0 20 0 19 Z" fill="#fdbb12"/><text x="6.5" y="19" font-family="Liberation Sans" font-weight="bold" font-size="27" fill="#111">?</text></svg><div style="position:absolute;left:1072.5px;top:320.94px;height:21.72px;line-height:21.72px;font-size:18.1px;color:#1d1d1d;font-weight:normal;white-space:pre;">etc</div><svg style="position:absolute;left:1009px;top:355.6px" width="14" height="10" viewBox="0 0 14 10"><path d="M1.5 2 L6.8 7.5 L12 2" stroke="#3a3a3a" stroke-width="2" fill="none"/></svg><svg style="position:absolute;left:1041px;top:349.1px;overflow:visible" width="24" height="22" viewBox="0 0 24 22"><rect x="1" y="1.5" width="21.5" height="19.5" rx="1" fill="#e3e3e3" opacity="0.55"/><path d="M0 1 Q0 0 1 0 L8.5 0 L10 2 L20.5 2 Q21.3 2 21.3 3 L21.3 6 L0 6 Z" fill="#dfa40c"/><path d="M0 3.5 L21.3 3.5 L21.3 19 Q21.3 20 20.3 20 L1 20 Q0 20 0 19 Z" fill="#fdbb12"/></svg><div style="position:absolute;left:1072.5px;top:349.94px;height:21.72px;line-height:21.72px;font-size:18.1px;color:#1d1d1d;font-weight:normal;white-space:pre;">inflo.kimino.my.id</div><svg style="position:absolute;left:1033.7px;top:380.8px" width="10" height="14" viewBox="0 0 10 14"><path d="M2 1.8 L7.5 7 L2 12.2" stroke="#3a3a3a" stroke-width="2.1" fill="none"/></svg><svg style="position:absolute;left:1064.5px;top:376.1px" width="25" height="21" viewBox="0 0 25 21"><path d="M0.5 1.5 Q0.5 0.5 1.5 0.5 L8.5 0.5 L10 2 L20.5 2 Q21.8 2 21.8 3.3 L21.8 11 L0.5 11 Z" fill="#dfa40d"/><path d="M0.5 10 L24.6 10 L21.8 19.3 Q21.5 20 20.8 20 L1.5 20 Q0.5 20 0.5 19 Z" fill="#fdbb12"/></svg><div style="position:absolute;left:1090.5px;top:374.1px;width:88.5px;height:28.5px;background:#d4d4d4"></div><div style="position:absolute;left:1095px;top:378.94px;height:21.72px;line-height:21.72px;font-size:18.1px;color:#ffffff;font-weight:normal;white-space:pre;">inflo-data</div><svg style="position:absolute;left:1041px;top:407.1px;overflow:visible" width="24" height="22" viewBox="0 0 24 22"><rect x="1" y="1.5" width="21.5" height="19.5" rx="1" fill="#e3e3e3" opacity="0.55"/><path d="M0 1 Q0 0 1 0 L8.5 0 L10 2 L20.5 2 Q21.3 2 21.3 3 L21.3 6 L0 6 Z" fill="#dfa40c"/><path d="M0 3.5 L21.3 3.5 L21.3 19 Q21.3 20 20.3 20 L1 20 Q0 20 0 19 Z" fill="#fdbb12"/><text x="6.5" y="19" font-family="Liberation Sans" font-weight="bold" font-size="27" fill="#111">?</text></svg><div style="position:absolute;left:1072.5px;top:407.94px;height:21.72px;line-height:21.72px;font-size:18.1px;color:#1d1d1d;font-weight:normal;white-space:pre;">kimino.my.id</div><svg style="position:absolute;left:1041px;top:436.1px;overflow:visible" width="24" height="22" viewBox="0 0 24 22"><rect x="1" y="1.5" width="21.5" height="19.5" rx="1" fill="#e3e3e3" opacity="0.55"/><path d="M0 1 Q0 0 1 0 L8.5 0 L10 2 L20.5 2 Q21.3 2 21.3 3 L21.3 6 L0 6 Z" fill="#dfa40c"/><path d="M0 3.5 L21.3 3.5 L21.3 19 Q21.3 20 20.3 20 L1 20 Q0 20 0 19 Z" fill="#fdbb12"/><text x="6.5" y="19" font-family="Liberation Sans" font-weight="bold" font-size="27" fill="#111">?</text></svg><div style="position:absolute;left:1072.5px;top:436.94px;height:21.72px;line-height:21.72px;font-size:18.1px;color:#1d1d1d;font-weight:normal;white-space:pre;">laravel.sumberweb.com</div><svg style="position:absolute;left:1041px;top:465.1px;overflow:visible" width="24" height="22" viewBox="0 0 24 22"><rect x="1" y="1.5" width="21.5" height="19.5" rx="1" fill="#e3e3e3" opacity="0.55"/><path d="M0 1 Q0 0 1 0 L8.5 0 L10 2 L20.5 2 Q21.3 2 21.3 3 L21.3 6 L0 6 Z" fill="#dfa40c"/><path d="M0 3.5 L21.3 3.5 L21.3 19 Q21.3 20 20.3 20 L1 20 Q0 20 0 19 Z" fill="#fdbb12"/><text x="6.5" y="19" font-family="Liberation Sans" font-weight="bold" font-size="27" fill="#111">?</text></svg><div style="position:absolute;left:1072.5px;top:465.94px;height:21.72px;line-height:21.72px;font-size:18.1px;color:#1d1d1d;font-weight:normal;white-space:pre;">logs</div><svg style="position:absolute;left:1041px;top:494.1px;overflow:visible" width="24" height="22" viewBox="0 0 24 22"><rect x="1" y="1.5" width="21.5" height="19.5" rx="1" fill="#e3e3e3" opacity="0.55"/><path d="M0 1 Q0 0 1 0 L8.5 0 L10 2 L20.5 2 Q21.3 2 21.3 3 L21.3 6 L0 6 Z" fill="#dfa40c"/><path d="M0 3.5 L21.3 3.5 L21.3 19 Q21.3 20 20.3 20 L1 20 Q0 20 0 19 Z" fill="#fdbb12"/><text x="6.5" y="19" font-family="Liberation Sans" font-weight="bold" font-size="27" fill="#111">?</text></svg><div style="position:absolute;left:1072.5px;top:494.94px;height:21.72px;line-height:21.72px;font-size:18.1px;color:#1d1d1d;font-weight:normal;white-space:pre;">lscache</div><svg style="position:absolute;left:1041px;top:523.1px;overflow:visible" width="24" height="22" viewBox="0 0 24 22"><rect x="1" y="1.5" width="21.5" height="19.5" rx="1" fill="#e3e3e3" opacity="0.55"/><path d="M0 1 Q0 0 1 0 L8.5 0 L10 2 L20.5 2 Q21.3 2 21.3 3 L21.3 6 L0 6 Z" fill="#dfa40c"/><path d="M0 3.5 L21.3 3.5 L21.3 19 Q21.3 20 20.3 20 L1 20 Q0 20 0 19 Z" fill="#fdbb12"/><text x="6.5" y="19" font-family="Liberation Sans" font-weight="bold" font-size="27" fill="#111">?</text></svg><div style="position:absolute;left:1072.5px;top:523.94px;height:21.72px;line-height:21.72px;font-size:18.1px;color:#1d1d1d;font-weight:normal;white-space:pre;">mail</div><svg style="position:absolute;left:1041px;top:552.1px;overflow:visible" width="24" height="22" viewBox="0 0 24 22"><rect x="1" y="1.5" width="21.5" height="19.5" rx="1" fill="#e3e3e3" opacity="0.55"/><path d="M0 1 Q0 0 1 0 L8.5 0 L10 2 L20.5 2 Q21.3 2 21.3 3 L21.3 6 L0 6 Z" fill="#dfa40c"/><path d="M0 3.5 L21.3 3.5 L21.3 19 Q21.3 20 20.3 20 L1 20 Q0 20 0 19 Z" fill="#fdbb12"/><text x="6.5" y="19" font-family="Liberation Sans" font-weight="bold" font-size="27" fill="#111">?</text></svg><div style="position:absolute;left:1072.5px;top:552.94px;height:21.72px;line-height:21.72px;font-size:18.1px;color:#1d1d1d;font-weight:normal;white-space:pre;">mailtest.sumberweb.com</div><svg style="position:absolute;left:1041px;top:581.1px;overflow:visible" width="24" height="22" viewBox="0 0 24 22"><rect x="1" y="1.5" width="21.5" height="19.5" rx="1" fill="#e3e3e3" opacity="0.55"/><path d="M0 1 Q0 0 1 0 L8.5 0 L10 2 L20.5 2 Q21.3 2 21.3 3 L21.3 6 L0 6 Z" fill="#dfa40c"/><path d="M0 3.5 L21.3 3.5 L21.3 19 Q21.3 20 20.3 20 L1 20 Q0 20 0 19 Z" fill="#fdbb12"/><text x="6.5" y="19" font-family="Liberation Sans" font-weight="bold" font-size="27" fill="#111">?</text></svg><div style="position:absolute;left:1072.5px;top:581.94px;height:21.72px;line-height:21.72px;font-size:18.1px;color:#1d1d1d;font-weight:normal;white-space:pre;">node.kimino.my.id</div><svg style="position:absolute;left:1041px;top:610.1px;overflow:visible" width="24" height="22" viewBox="0 0 24 22"><rect x="1" y="1.5" width="21.5" height="19.5" rx="1" fill="#e3e3e3" opacity="0.55"/><path d="M0 1 Q0 0 1 0 L8.5 0 L10 2 L20.5 2 Q21.3 2 21.3 3 L21.3 6 L0 6 Z" fill="#dfa40c"/><path d="M0 3.5 L21.3 3.5 L21.3 19 Q21.3 20 20.3 20 L1 20 Q0 20 0 19 Z" fill="#fdbb12"/><text x="6.5" y="19" font-family="Liberation Sans" font-weight="bold" font-size="27" fill="#111">?</text></svg><div style="position:absolute;left:1072.5px;top:610.94px;height:21.72px;line-height:21.72px;font-size:18.1px;color:#1d1d1d;font-weight:normal;white-space:pre;">nodevenv</div><svg style="position:absolute;left:1041px;top:639.1px;overflow:visible" width="24" height="22" viewBox="0 0 24 22"><rect x="1" y="1.5" width="21.5" height="19.5" rx="1" fill="#e3e3e3" opacity="0.55"/><path d="M0 1 Q0 0 1 0 L8.5 0 L10 2 L20.5 2 Q21.3 2 21.3 3 L21.3 6 L0 6 Z" fill="#dfa40c"/><path d="M0 3.5 L21.3 3.5 L21.3 19 Q21.3 20 20.3 20 L1 20 Q0 20 0 19 Z" fill="#fdbb12"/><text x="6.5" y="19" font-family="Liberation Sans" font-weight="bold" font-size="27" fill="#111">?</text></svg><div style="position:absolute;left:1072.5px;top:639.94px;height:21.72px;line-height:21.72px;font-size:18.1px;color:#1d1d1d;font-weight:normal;white-space:pre;">public_ftp</div></div></div><div style="position:absolute;left:14.5px;top:610.42px;height:20.76px;line-height:20.76px;font-size:17.3px;color:#262626;font-weight:normal;white-space:pre;">Filename</div><svg style="position:absolute;left:96px;top:613px" width="21" height="13" viewBox="0 0 21 13"><path d="M2 11 L10.5 2.5 L19 11" stroke="#4a4a4a" stroke-width="3" fill="none"/></svg><div style="position:absolute;left:263px;top:611.6px;width:2px;height:17px;background:#e0e0e0"></div><div style="position:absolute;left:385px;top:611.6px;width:2px;height:17px;background:#e0e0e0"></div><div style="position:absolute;left:567.5px;top:611.6px;width:2px;height:17px;background:#e0e0e0"></div><div style="position:absolute;left:750.5px;top:611.6px;width:2px;height:17px;background:#e0e0e0"></div><div style="position:absolute;left:959px;top:611.6px;width:2px;height:17px;background:#e0e0e0"></div><div style="position:absolute;right:1545px;top:610.42px;height:20.76px;line-height:20.76px;font-size:17.3px;color:#262626;font-weight:normal;white-space:pre;text-align:right;">Filesize</div><div style="position:absolute;left:395px;top:610.42px;height:20.76px;line-height:20.76px;font-size:17.3px;color:#262626;font-weight:normal;white-space:pre;">Filetype</div><div style="position:absolute;left:578.4px;top:610.42px;height:20.76px;line-height:20.76px;font-size:17.3px;color:#262626;font-weight:normal;white-space:pre;">Last modified</div><svg style="position:absolute;left:8px;top:639px;overflow:visible" width="24" height="22" viewBox="0 0 24 22"><rect x="1" y="1.5" width="21.5" height="19.5" rx="1" fill="#e3e3e3" opacity="0.55"/><path d="M0 1 Q0 0 1 0 L8.5 0 L10 2 L20.5 2 Q21.3 2 21.3 3 L21.3 6 L0 6 Z" fill="#dfa40c"/><path d="M0 3.5 L21.3 3.5 L21.3 19 Q21.3 20 20.3 20 L1 20 Q0 20 0 19 Z" fill="#fdbb12"/></svg><div style="position:absolute;left:40px;top:638.62px;height:24.96px;line-height:24.96px;font-size:20.8px;color:#1f1f1f;font-weight:normal;white-space:pre;letter-spacing:0.2px">..</div><svg style="position:absolute;left:8px;top:672px;overflow:visible" width="24" height="22" viewBox="0 0 24 22"><rect x="1" y="1.5" width="21.5" height="19.5" rx="1" fill="#e3e3e3" opacity="0.55"/><path d="M0 1 Q0 0 1 0 L8.5 0 L10 2 L20.5 2 Q21.3 2 21.3 3 L21.3 6 L0 6 Z" fill="#dfa40c"/><path d="M0 3.5 L21.3 3.5 L21.3 19 Q21.3 20 20.3 20 L1 20 Q0 20 0 19 Z" fill="#fdbb12"/></svg><div style="position:absolute;left:40px;top:672.17px;height:24.96px;line-height:24.96px;font-size:20.8px;color:#1f1f1f;font-weight:normal;white-space:pre;letter-spacing:0.2px">.git</div><div style="position:absolute;left:389.5px;top:672.17px;height:24.96px;line-height:24.96px;font-size:20.8px;color:#1f1f1f;font-weight:normal;white-space:pre;letter-spacing:0.2px">Directory</div><div style="position:absolute;left:572px;top:672.17px;height:24.96px;line-height:24.96px;font-size:20.8px;color:#1f1f1f;font-weight:normal;white-space:pre;">10/10/25 08:07:16</div><svg style="position:absolute;left:8px;top:706px;overflow:visible" width="24" height="22" viewBox="0 0 24 22"><rect x="1" y="1.5" width="21.5" height="19.5" rx="1" fill="#e3e3e3" opacity="0.55"/><path d="M0 1 Q0 0 1 0 L8.5 0 L10 2 L20.5 2 Q21.3 2 21.3 3 L21.3 6 L0 6 Z" fill="#dfa40c"/><path d="M0 3.5 L21.3 3.5 L21.3 19 Q21.3 20 20.3 20 L1 20 Q0 20 0 19 Z" fill="#fdbb12"/></svg><div style="position:absolute;left:40px;top:705.72px;height:24.96px;line-height:24.96px;font-size:20.8px;color:#1f1f1f;font-weight:normal;white-space:pre;letter-spacing:0.2px">.next</div><div style="position:absolute;left:389.5px;top:705.72px;height:24.96px;line-height:24.96px;font-size:20.8px;color:#1f1f1f;font-weight:normal;white-space:pre;letter-spacing:0.2px">Directory</div><div style="position:absolute;left:572px;top:705.72px;height:24.96px;line-height:24.96px;font-size:20.8px;color:#1f1f1f;font-weight:normal;white-space:pre;">10/13/25 13:20:12</div><svg style="position:absolute;left:8px;top:740px;overflow:visible" width="24" height="22" viewBox="0 0 24 22"><rect x="1" y="1.5" width="21.5" height="19.5" rx="1" fill="#e3e3e3" opacity="0.55"/><path d="M0 1 Q0 0 1 0 L8.5 0 L10 2 L20.5 2 Q21.3 2 21.3 3 L21.3 6 L0 6 Z" fill="#dfa40c"/><path d="M0 3.5 L21.3 3.5 L21.3 19 Q21.3 20 20.3 20 L1 20 Q0 20 0 19 Z" fill="#fdbb12"/></svg><div style="position:absolute;left:40px;top:739.27px;height:24.96px;line-height:24.96px;font-size:20.8px;color:#1f1f1f;font-weight:normal;white-space:pre;letter-spacing:0.2px">lib</div><div style="position:absolute;left:389.5px;top:739.27px;height:24.96px;line-height:24.96px;font-size:20.8px;color:#1f1f1f;font-weight:normal;white-space:pre;letter-spacing:0.2px">Directory</div><div style="position:absolute;left:572px;top:739.27px;height:24.96px;line-height:24.96px;font-size:20.8px;color:#1f1f1f;font-weight:normal;white-space:pre;">10/10/25 10:01:10</div><svg style="position:absolute;left:8px;top:773px;overflow:visible" width="24" height="22" viewBox="0 0 24 22"><rect x="1" y="1.5" width="21.5" height="19.5" rx="1" fill="#e3e3e3" opacity="0.55"/><path d="M0 1 Q0 0 1 0 L8.5 0 L10 2 L20.5 2 Q21.3 2 21.3 3 L21.3 6 L0 6 Z" fill="#dfa40c"/><path d="M0 3.5 L21.3 3.5 L21.3 19 Q21.3 20 20.3 20 L1 20 Q0 20 0 19 Z" fill="#fdbb12"/></svg><div style="position:absolute;left:40px;top:772.82px;height:24.96px;line-height:24.96px;font-size:20.8px;color:#1f1f1f;font-weight:normal;white-space:pre;letter-spacing:0.2px">node_modules</div><div style="position:absolute;left:389.5px;top:772.82px;height:24.96px;line-height:24.96px;font-size:20.8px;color:#1f1f1f;font-weight:normal;white-space:pre;letter-spacing:0.2px">Directory</div><div style="position:absolute;left:572px;top:772.82px;height:24.96px;line-height:24.96px;font-size:20.8px;color:#1f1f1f;font-weight:normal;white-space:pre;">10/12/25 07:01:25</div><svg style="position:absolute;left:8px;top:807px;overflow:visible" width="24" height="22" viewBox="0 0 24 22"><rect x="1" y="1.5" width="21.5" height="19.5" rx="1" fill="#e3e3e3" opacity="0.55"/><path d="M0 1 Q0 0 1 0 L8.5 0 L10 2 L20.5 2 Q21.3 2 21.3 3 L21.3 6 L0 6 Z" fill="#dfa40c"/><path d="M0 3.5 L21.3 3.5 L21.3 19 Q21.3 20 20.3 20 L1 20 Q0 20 0 19 Z" fill="#fdbb12"/></svg><div style="position:absolute;left:40px;top:806.37px;height:24.96px;line-height:24.96px;font-size:20.8px;color:#1f1f1f;font-weight:normal;white-space:pre;letter-spacing:0.2px">prisma</div><div style="position:absolute;left:389.5px;top:806.37px;height:24.96px;line-height:24.96px;font-size:20.8px;color:#1f1f1f;font-weight:normal;white-space:pre;letter-spacing:0.2px">Directory</div><div style="position:absolute;left:572px;top:806.37px;height:24.96px;line-height:24.96px;font-size:20.8px;color:#1f1f1f;font-weight:normal;white-space:pre;">10/11/25 14:38:41</div><svg style="position:absolute;left:8px;top:840px;overflow:visible" width="24" height="22" viewBox="0 0 24 22"><rect x="1" y="1.5" width="21.5" height="19.5" rx="1" fill="#e3e3e3" opacity="0.55"/><path d="M0 1 Q0 0 1 0 L8.5 0 L10 2 L20.5 2 Q21.3 2 21.3 3 L21.3 6 L0 6 Z" fill="#dfa40c"/><path d="M0 3.5 L21.3 3.5 L21.3 19 Q21.3 20 20.3 20 L1 20 Q0 20 0 19 Z" fill="#fdbb12"/></svg><div style="position:absolute;left:40px;top:839.92px;height:24.96px;line-height:24.96px;font-size:20.8px;color:#1f1f1f;font-weight:normal;white-space:pre;letter-spacing:0.2px">public</div><div style="position:absolute;left:389.5px;top:839.92px;height:24.96px;line-height:24.96px;font-size:20.8px;color:#1f1f1f;font-weight:normal;white-space:pre;letter-spacing:0.2px">Directory</div><div style="position:absolute;left:572px;top:839.92px;height:24.96px;line-height:24.96px;font-size:20.8px;color:#1f1f1f;font-weight:normal;white-space:pre;">10/10/25 08:07:00</div><svg style="position:absolute;left:8px;top:874px;overflow:visible" width="24" height="22" viewBox="0 0 24 22"><rect x="1" y="1.5" width="21.5" height="19.5" rx="1" fill="#e3e3e3" opacity="0.55"/><path d="M0 1 Q0 0 1 0 L8.5 0 L10 2 L20.5 2 Q21.3 2 21.3 3 L21.3 6 L0 6 Z" fill="#dfa40c"/><path d="M0 3.5 L21.3 3.5 L21.3 19 Q21.3 20 20.3 20 L1 20 Q0 20 0 19 Z" fill="#fdbb12"/></svg><div style="position:absolute;left:40px;top:873.47px;height:24.96px;line-height:24.96px;font-size:20.8px;color:#1f1f1f;font-weight:normal;white-space:pre;letter-spacing:0.2px">src</div><div style="position:absolute;left:389.5px;top:873.47px;height:24.96px;line-height:24.96px;font-size:20.8px;color:#1f1f1f;font-weight:normal;white-space:pre;letter-spacing:0.2px">Directory</div><div style="position:absolute;left:572px;top:873.47px;height:24.96px;line-height:24.96px;font-size:20.8px;color:#1f1f1f;font-weight:normal;white-space:pre;">10/10/25 09:30:53</div><svg style="position:absolute;left:10px;top:905px" width="21" height="26" viewBox="0 0 21 26"><path d="M1 1 L13.8 1 L19 6.2 L19 24 L1 24 Z" fill="#fff" stroke="#e3e3e3" stroke-width="1"/><rect x="15.3" y="6.8" width="3.2" height="16.7" fill="#ebebeb"/><rect x="1.5" y="21" width="17" height="2.5" fill="#ebebeb"/></svg><div style="position:absolute;left:40px;top:907.02px;height:24.96px;line-height:24.96px;font-size:20.8px;color:#1f1f1f;font-weight:normal;white-space:pre;letter-spacing:0.2px">.DS_Store</div><div style="position:absolute;right:1544.5px;top:907.02px;height:24.96px;line-height:24.96px;font-size:20.8px;color:#1f1f1f;font-weight:normal;white-space:pre;text-align:right;">6148</div><div style="position:absolute;left:389.5px;top:907.02px;height:24.96px;line-height:24.96px;font-size:20.8px;color:#1f1f1f;font-weight:normal;white-space:pre;letter-spacing:0.2px">File</div><div style="position:absolute;left:572px;top:907.02px;height:24.96px;line-height:24.96px;font-size:20.8px;color:#1f1f1f;font-weight:normal;white-space:pre;">10/13/25 06:26:47</div><svg style="position:absolute;left:10px;top:938px" width="21" height="26" viewBox="0 0 21 26"><path d="M1 1 L13.8 1 L19 6.2 L19 24 L1 24 Z" fill="#fff" stroke="#e3e3e3" stroke-width="1"/><rect x="15.3" y="6.8" width="3.2" height="16.7" fill="#ebebeb"/><rect x="1.5" y="21" width="17" height="2.5" fill="#ebebeb"/></svg><div style="position:absolute;left:40px;top:940.57px;height:24.96px;line-height:24.96px;font-size:20.8px;color:#1f1f1f;font-weight:normal;white-space:pre;letter-spacing:0.2px">.env</div><div style="position:absolute;right:1544.5px;top:940.57px;height:24.96px;line-height:24.96px;font-size:20.8px;color:#1f1f1f;font-weight:normal;white-space:pre;text-align:right;">919</div><div style="position:absolute;left:389.5px;top:940.57px;height:24.96px;line-height:24.96px;font-size:20.8px;color:#1f1f1f;font-weight:normal;white-space:pre;letter-spacing:0.2px">File</div><div style="position:absolute;left:572px;top:940.57px;height:24.96px;line-height:24.96px;font-size:20.8px;color:#1f1f1f;font-weight:normal;white-space:pre;">10/13/25 16:16:55</div><svg style="position:absolute;left:10px;top:972px" width="21" height="26" viewBox="0 0 21 26"><path d="M1 1 L13.8 1 L19 6.2 L19 24 L1 24 Z" fill="#fff" stroke="#e3e3e3" stroke-width="1"/><rect x="15.3" y="6.8" width="3.2" height="16.7" fill="#ebebeb"/><rect x="1.5" y="21" width="17" height="2.5" fill="#ebebeb"/></svg><div style="position:absolute;left:40px;top:974.12px;height:24.96px;line-height:24.96px;font-size:20.8px;color:#1f1f1f;font-weight:normal;white-space:pre;letter-spacing:0.2px">.gitignore</div><div style="position:absolute;right:1544.5px;top:974.12px;height:24.96px;line-height:24.96px;font-size:20.8px;color:#1f1f1f;font-weight:normal;white-space:pre;text-align:right;">503</div><div style="position:absolute;left:389.5px;top:974.12px;height:24.96px;line-height:24.96px;font-size:20.8px;color:#1f1f1f;font-weight:normal;white-space:pre;letter-spacing:0.2px">File</div><div style="position:absolute;left:572px;top:974.12px;height:24.96px;line-height:24.96px;font-size:20.8px;color:#1f1f1f;font-weight:normal;white-space:pre;">10/10/25 09:20:42</div><svg style="position:absolute;left:10px;top:1005px" width="21" height="26" viewBox="0 0 21 26"><path d="M1 1 L13.8 1 L19 6.2 L19 24 L1 24 Z" fill="#fff" stroke="#e3e3e3" stroke-width="1"/><rect x="15.3" y="6.8" width="3.2" height="16.7" fill="#ebebeb"/><rect x="1.5" y="21" width="17" height="2.5" fill="#ebebeb"/></svg><div style="position:absolute;left:40px;top:1007.67px;height:24.96px;line-height:24.96px;font-size:20.8px;color:#1f1f1f;font-weight:normal;white-space:pre;letter-spacing:0.2px">README.md</div><div style="position:absolute;right:1544.5px;top:1007.67px;height:24.96px;line-height:24.96px;font-size:20.8px;color:#1f1f1f;font-weight:normal;white-space:pre;text-align:right;">1450</div><div style="position:absolute;left:389.5px;top:1007.67px;height:24.96px;line-height:24.96px;font-size:20.8px;color:#1f1f1f;font-weight:normal;white-space:pre;letter-spacing:0.2px">Markdown docu...</div><div style="position:absolute;left:572px;top:1007.67px;height:24.96px;line-height:24.96px;font-size:20.8px;color:#1f1f1f;font-weight:normal;white-space:pre;">10/10/25 08:07:00</div><svg style="position:absolute;left:10px;top:1039px" width="21" height="26" viewBox="0 0 21 26"><path d="M1 1 L13.8 1 L19 6.2 L19 24 L1 24 Z" fill="#fff" stroke="#e3e3e3" stroke-width="1"/><rect x="15.3" y="6.8" width="3.2" height="16.7" fill="#ebebeb"/><rect x="1.5" y="21" width="17" height="2.5" fill="#ebebeb"/></svg><div style="position:absolute;left:40px;top:1041.22px;height:24.96px;line-height:24.96px;font-size:20.8px;color:#1f1f1f;font-weight:normal;white-space:pre;letter-spacing:0.2px">components.json</div><div style="position:absolute;right:1544.5px;top:1041.22px;height:24.96px;line-height:24.96px;font-size:20.8px;color:#1f1f1f;font-weight:normal;white-space:pre;text-align:right;">454</div><div style="position:absolute;left:389.5px;top:1041.22px;height:24.96px;line-height:24.96px;font-size:20.8px;color:#1f1f1f;font-weight:normal;white-space:pre;letter-spacing:0.2px">JSON document</div><div style="position:absolute;left:572px;top:1041.22px;height:24.96px;line-height:24.96px;font-size:20.8px;color:#1f1f1f;font-weight:normal;white-space:pre;">10/10/25 08:21:26</div><svg style="position:absolute;left:10px;top:1073px" width="21" height="26" viewBox="0 0 21 26"><path d="M1 1 L13.8 1 L19 6.2 L19 24 L1 24 Z" fill="#fff" stroke="#e3e3e3" stroke-width="1"/><rect x="15.3" y="6.8" width="3.2" height="16.7" fill="#ebebeb"/><rect x="1.5" y="21" width="17" height="2.5" fill="#ebebeb"/></svg><div style="position:absolute;left:40px;top:1074.77px;height:24.96px;line-height:24.96px;font-size:20.8px;color:#1f1f1f;font-weight:normal;white-space:pre;letter-spacing:0.2px">eslint.config.mjs</div><div style="position:absolute;right:1544.5px;top:1074.77px;height:24.96px;line-height:24.96px;font-size:20.8px;color:#1f1f1f;font-weight:normal;white-space:pre;text-align:right;">524</div><div style="position:absolute;left:389.5px;top:1074.77px;height:24.96px;line-height:24.96px;font-size:20.8px;color:#1f1f1f;font-weight:normal;white-space:pre;letter-spacing:0.2px">JavaScript script</div><div style="position:absolute;left:572px;top:1074.77px;height:24.96px;line-height:24.96px;font-size:20.8px;color:#1f1f1f;font-weight:normal;white-space:pre;">10/10/25 08:07:00</div><svg style="position:absolute;left:10px;top:1106px" width="21" height="26" viewBox="0 0 21 26"><path d="M1 1 L13.8 1 L19 6.2 L19 24 L1 24 Z" fill="#fff" stroke="#e3e3e3" stroke-width="1"/><rect x="15.3" y="6.8" width="3.2" height="16.7" fill="#ebebeb"/><rect x="1.5" y="21" width="17" height="2.5" fill="#ebebeb"/></svg><div style="position:absolute;left:40px;top:1108.32px;height:24.96px;line-height:24.96px;font-size:20.8px;color:#1f1f1f;font-weight:normal;white-space:pre;letter-spacing:0.2px">inflo.db.gz</div><div style="position:absolute;right:1544.5px;top:1108.32px;height:24.96px;line-height:24.96px;font-size:20.8px;color:#1f1f1f;font-weight:normal;white-space:pre;text-align:right;">1695</div><div style="position:absolute;left:389.5px;top:1108.32px;height:24.96px;line-height:24.96px;font-size:20.8px;color:#1f1f1f;font-weight:normal;white-space:pre;letter-spacing:0.2px">gz-file</div><div style="position:absolute;left:572px;top:1108.32px;height:24.96px;line-height:24.96px;font-size:20.8px;color:#1f1f1f;font-weight:normal;white-space:pre;">10/12/25 09:40:52</div><svg style="position:absolute;left:10px;top:1140px" width="21" height="26" viewBox="0 0 21 26"><path d="M1 1 L13.8 1 L19 6.2 L19 24 L1 24 Z" fill="#fff" stroke="#e3e3e3" stroke-width="1"/><rect x="15.3" y="6.8" width="3.2" height="16.7" fill="#ebebeb"/><rect x="1.5" y="21" width="17" height="2.5" fill="#ebebeb"/></svg><div style="position:absolute;left:40px;top:1141.87px;height:24.96px;line-height:24.96px;font-size:20.8px;color:#1f1f1f;font-weight:normal;white-space:pre;letter-spacing:0.2px">next-env.d.ts</div><div style="position:absolute;right:1544.5px;top:1141.87px;height:24.96px;line-height:24.96px;font-size:20.8px;color:#1f1f1f;font-weight:normal;white-space:pre;text-align:right;">262</div><div style="position:absolute;left:389.5px;top:1141.87px;height:24.96px;line-height:24.96px;font-size:20.8px;color:#1f1f1f;font-weight:normal;white-space:pre;letter-spacing:0.2px">TypeScript file</div><div style="position:absolute;left:572px;top:1141.87px;height:24.96px;line-height:24.96px;font-size:20.8px;color:#1f1f1f;font-weight:normal;white-space:pre;">10/10/25 08:07:00</div><svg style="position:absolute;left:10px;top:1173px" width="21" height="26" viewBox="0 0 21 26"><path d="M1 1 L13.8 1 L19 6.2 L19 24 L1 24 Z" fill="#fff" stroke="#e3e3e3" stroke-width="1"/><rect x="15.3" y="6.8" width="3.2" height="16.7" fill="#ebebeb"/><rect x="1.5" y="21" width="17" height="2.5" fill="#ebebeb"/></svg><div style="position:absolute;left:40px;top:1175.42px;height:24.96px;line-height:24.96px;font-size:20.8px;color:#1f1f1f;font-weight:normal;white-space:pre;letter-spacing:0.2px">next.config.ts</div><div style="position:absolute;right:1544.5px;top:1175.42px;height:24.96px;line-height:24.96px;font-size:20.8px;color:#1f1f1f;font-weight:normal;white-space:pre;text-align:right;">170</div><div style="position:absolute;left:389.5px;top:1175.42px;height:24.96px;line-height:24.96px;font-size:20.8px;color:#1f1f1f;font-weight:normal;white-space:pre;letter-spacing:0.2px">TypeScript file</div><div style="position:absolute;left:572px;top:1175.42px;height:24.96px;line-height:24.96px;font-size:20.8px;color:#1f1f1f;font-weight:normal;white-space:pre;">10/13/25 12:49:38</div><svg style="position:absolute;left:10px;top:1207px" width="21" height="26" viewBox="0 0 21 26"><path d="M1 1 L13.8 1 L19 6.2 L19 24 L1 24 Z" fill="#fff" stroke="#e3e3e3" stroke-width="1"/><rect x="15.3" y="6.8" width="3.2" height="16.7" fill="#ebebeb"/><rect x="1.5" y="21" width="17" height="2.5" fill="#ebebeb"/></svg><div style="position:absolute;left:40px;top:1208.97px;height:24.96px;line-height:24.96px;font-size:20.8px;color:#1f1f1f;font-weight:normal;white-space:pre;letter-spacing:0.2px">package-lock.json</div><div style="position:absolute;right:1544.5px;top:1208.97px;height:24.96px;line-height:24.96px;font-size:20.8px;color:#1f1f1f;font-weight:normal;white-space:pre;text-align:right;">264727</div><div style="position:absolute;left:389.5px;top:1208.97px;height:24.96px;line-height:24.96px;font-size:20.8px;color:#1f1f1f;font-weight:normal;white-space:pre;letter-spacing:0.2px">JSON document</div><div style="position:absolute;left:572px;top:1208.97px;height:24.96px;line-height:24.96px;font-size:20.8px;color:#1f1f1f;font-weight:normal;white-space:pre;">10/13/25 01:14:09</div><svg style="position:absolute;left:10px;top:1240px" width="21" height="26" viewBox="0 0 21 26"><path d="M1 1 L13.8 1 L19 6.2 L19 24 L1 24 Z" fill="#fff" stroke="#e3e3e3" stroke-width="1"/><rect x="15.3" y="6.8" width="3.2" height="16.7" fill="#ebebeb"/><rect x="1.5" y="21" width="17" height="2.5" fill="#ebebeb"/></svg><div style="position:absolute;left:40px;top:1242.52px;height:24.96px;line-height:24.96px;font-size:20.8px;color:#1f1f1f;font-weight:normal;white-space:pre;letter-spacing:0.2px">package.json</div><div style="position:absolute;right:1544.5px;top:1242.52px;height:24.96px;line-height:24.96px;font-size:20.8px;color:#1f1f1f;font-weight:normal;white-space:pre;text-align:right;">1523</div><div style="position:absolute;left:389.5px;top:1242.52px;height:24.96px;line-height:24.96px;font-size:20.8px;color:#1f1f1f;font-weight:normal;white-space:pre;letter-spacing:0.2px">JSON document</div><div style="position:absolute;left:572px;top:1242.52px;height:24.96px;line-height:24.96px;font-size:20.8px;color:#1f1f1f;font-weight:normal;white-space:pre;">10/13/25 12:51:15</div><svg style="position:absolute;left:10px;top:1274px" width="21" height="26" viewBox="0 0 21 26"><path d="M1 1 L13.8 1 L19 6.2 L19 24 L1 24 Z" fill="#fff" stroke="#e3e3e3" stroke-width="1"/><rect x="15.3" y="6.8" width="3.2" height="16.7" fill="#ebebeb"/><rect x="1.5" y="21" width="17" height="2.5" fill="#ebebeb"/></svg><div style="position:absolute;left:40px;top:1276.07px;height:24.96px;line-height:24.96px;font-size:20.8px;color:#1f1f1f;font-weight:normal;white-space:pre;letter-spacing:0.2px">postcss.config.mjs</div><div style="position:absolute;right:1544.5px;top:1276.07px;height:24.96px;line-height:24.96px;font-size:20.8px;color:#1f1f1f;font-weight:normal;white-space:pre;text-align:right;">81</div><div style="position:absolute;left:389.5px;top:1276.07px;height:24.96px;line-height:24.96px;font-size:20.8px;color:#1f1f1f;font-weight:normal;white-space:pre;letter-spacing:0.2px">JavaScript script</div><div style="position:absolute;left:572px;top:1276.07px;height:24.96px;line-height:24.96px;font-size:20.8px;color:#1f1f1f;font-weight:normal;white-space:pre;">10/10/25 08:07:00</div><svg style="position:absolute;left:10px;top:1307px" width="21" height="26" viewBox="0 0 21 26"><path d="M1 1 L13.8 1 L19 6.2 L19 24 L1 24 Z" fill="#fff" stroke="#e3e3e3" stroke-width="1"/><rect x="15.3" y="6.8" width="3.2" height="16.7" fill="#ebebeb"/><rect x="1.5" y="21" width="17" height="2.5" fill="#ebebeb"/></svg><div style="position:absolute;left:40px;top:1309.62px;height:24.96px;line-height:24.96px;font-size:20.8px;color:#1f1f1f;font-weight:normal;white-space:pre;letter-spacing:0.2px">server.js</div><div style="position:absolute;right:1544.5px;top:1309.62px;height:24.96px;line-height:24.96px;font-size:20.8px;color:#1f1f1f;font-weight:normal;white-space:pre;text-align:right;">594</div><div style="position:absolute;left:389.5px;top:1309.62px;height:24.96px;line-height:24.96px;font-size:20.8px;color:#1f1f1f;font-weight:normal;white-space:pre;letter-spacing:0.2px">JavaScript script</div><div style="position:absolute;left:572px;top:1309.62px;height:24.96px;line-height:24.96px;font-size:20.8px;color:#1f1f1f;font-weight:normal;white-space:pre;">10/13/25 15:19:06</div><svg style="position:absolute;left:10px;top:1341px" width="21" height="26" viewBox="0 0 21 26"><path d="M1 1 L13.8 1 L19 6.2 L19 24 L1 24 Z" fill="#fff" stroke="#e3e3e3" stroke-width="1"/><rect x="15.3" y="6.8" width="3.2" height="16.7" fill="#ebebeb"/><rect x="1.5" y="21" width="17" height="2.5" fill="#ebebeb"/></svg><div style="position:absolute;left:40px;top:1343.17px;height:24.96px;line-height:24.96px;font-size:20.8px;color:#1f1f1f;font-weight:normal;white-space:pre;letter-spacing:0.2px">tsconfig.json</div><div style="position:absolute;right:1544.5px;top:1343.17px;height:24.96px;line-height:24.96px;font-size:20.8px;color:#1f1f1f;font-weight:normal;white-space:pre;text-align:right;">622</div><div style="position:absolute;left:389.5px;top:1343.17px;height:24.96px;line-height:24.96px;font-size:20.8px;color:#1f1f1f;font-weight:normal;white-space:pre;letter-spacing:0.2px">JSON document</div><div style="position:absolute;left:572px;top:1343.17px;height:24.96px;line-height:24.96px;font-size:20.8px;color:#1f1f1f;font-weight:normal;white-space:pre;">10/10/25 21:24:46</div><div style="position:absolute;left:12.5px;top:1403.49px;height:25.02px;line-height:25.02px;font-size:20.85px;color:#222;font-weight:normal;white-space:pre;">14 files and 7 directories. Total size: 279672 bytes</div><div style="position:absolute;left:978px;top:673.42px;height:20.76px;line-height:20.76px;font-size:17.3px;color:#262626;font-weight:normal;white-space:pre;">Filename</div><svg style="position:absolute;left:1060px;top:676px" width="21" height="13" viewBox="0 0 21 13"><path d="M2 11 L10.5 2.5 L19 11" stroke="#4a4a4a" stroke-width="3" fill="none"/></svg><div style="position:absolute;left:1196.5px;top:674.6px;width:2px;height:17px;background:#e0e0e0"></div><div style="position:absolute;left:1310.5px;top:674.6px;width:2px;height:17px;background:#e0e0e0"></div><div style="position:absolute;left:1432.5px;top:674.6px;width:2px;height:17px;background:#e0e0e0"></div><div style="position:absolute;left:1585px;top:674.6px;width:2px;height:17px;background:#e0e0e0"></div><div style="position:absolute;left:1707px;top:674.6px;width:2px;height:17px;background:#e0e0e0"></div><div style="position:absolute;left:1837px;top:674.6px;width:2px;height:17px;background:#e0e0e0"></div><div style="position:absolute;right:619.5px;top:673.42px;height:20.76px;line-height:20.76px;font-size:17.3px;color:#262626;font-weight:normal;white-space:pre;text-align:right;">Filesize</div><div style="position:absolute;left:1321px;top:673.42px;height:20.76px;line-height:20.76px;font-size:17.3px;color:#262626;font-weight:normal;white-space:pre;">Filetype</div><div style="position:absolute;left:1443px;top:673.42px;height:20.76px;line-height:20.76px;font-size:17.3px;color:#262626;font-weight:normal;white-space:pre;">Last modified</div><div style="position:absolute;left:1595.5px;top:673.42px;height:20.76px;line-height:20.76px;font-size:17.3px;color:#262626;font-weight:normal;white-space:pre;">Permissions</div><div style="position:absolute;left:1717.5px;top:673.42px;height:20.76px;line-height:20.76px;font-size:17.3px;color:#262626;font-weight:normal;white-space:pre;">Owner/Group</div><div style="position:absolute;left:968px;top:695px;width:926px;height:705px;overflow:hidden"><div style="position:absolute;left:-968px;top:-695px;width:1920px;height:1592px"><svg style="position:absolute;left:972px;top:701px;overflow:visible" width="24" height="22" viewBox="0 0 24 22"><rect x="1" y="1.5" width="21.5" height="19.5" rx="1" fill="#e3e3e3" opacity="0.55"/><path d="M0 1 Q0 0 1 0 L8.5 0 L10 2 L20.5 2 Q21.3 2 21.3 3 L21.3 6 L0 6 Z" fill="#dfa40c"/><path d="M0 3.5 L21.3 3.5 L21.3 19 Q21.3 20 20.3 20 L1 20 Q0 20 0 19 Z" fill="#fdbb12"/></svg><div style="position:absolute;left:1004px;top:700.72px;height:24.96px;line-height:24.96px;font-size:20.8px;color:#1f1f1f;font-weight:normal;white-space:pre;letter-spacing:0.2px">..</div><svg style="position:absolute;left:972px;top:735px;overflow:visible" width="24" height="22" viewBox="0 0 24 22"><rect x="1" y="1.5" width="21.5" height="19.5" rx="1" fill="#e3e3e3" opacity="0.55"/><path d="M0 1 Q0 0 1 0 L8.5 0 L10 2 L20.5 2 Q21.3 2 21.3 3 L21.3 6 L0 6 Z" fill="#dfa40c"/><path d="M0 3.5 L21.3 3.5 L21.3 19 Q21.3 20 20.3 20 L1 20 Q0 20 0 19 Z" fill="#fdbb12"/></svg><div style="position:absolute;left:1004px;top:734.27px;height:24.96px;line-height:24.96px;font-size:20.8px;color:#1f1f1f;font-weight:normal;white-space:pre;letter-spacing:0.2px">.git</div><div style="position:absolute;left:1315px;top:734.27px;height:24.96px;line-height:24.96px;font-size:20.8px;color:#1f1f1f;font-weight:normal;white-space:pre;letter-spacing:0.2px">Directory</div><div style="position:absolute;left:1437px;top:734.27px;height:24.96px;line-height:24.96px;font-size:20.8px;color:#1f1f1f;font-weight:normal;white-space:pre;">10/13/25 05:...</div><div style="position:absolute;left:1589.5px;top:734.27px;height:24.96px;line-height:24.96px;font-size:20.8px;color:#1f1f1f;font-weight:normal;white-space:pre;">flcdmpe (...</div><div style="position:absolute;left:1711.5px;top:734.27px;height:24.96px;line-height:24.96px;font-size:20.8px;color:#1f1f1f;font-weight:normal;white-space:pre;">devstudi 1...</div><svg style="position:absolute;left:972px;top:768px;overflow:visible" width="24" height="22" viewBox="0 0 24 22"><rect x="1" y="1.5" width="21.5" height="19.5" rx="1" fill="#e3e3e3" opacity="0.55"/><path d="M0 1 Q0 0 1 0 L8.5 0 L10 2 L20.5 2 Q21.3 2 21.3 3 L21.3 6 L0 6 Z" fill="#dfa40c"/><path d="M0 3.5 L21.3 3.5 L21.3 19 Q21.3 20 20.3 20 L1 20 Q0 20 0 19 Z" fill="#fdbb12"/></svg><div style="position:absolute;left:1004px;top:767.82px;height:24.96px;line-height:24.96px;font-size:20.8px;color:#1f1f1f;font-weight:normal;white-space:pre;letter-spacing:0.2px">.next</div><div style="position:absolute;left:1315px;top:767.82px;height:24.96px;line-height:24.96px;font-size:20.8px;color:#1f1f1f;font-weight:normal;white-space:pre;letter-spacing:0.2px">Directory</div><div style="position:absolute;left:1437px;top:767.82px;height:24.96px;line-height:24.96px;font-size:20.8px;color:#1f1f1f;font-weight:normal;white-space:pre;">10/13/25 13:2...</div><div style="position:absolute;left:1589.5px;top:767.82px;height:24.96px;line-height:24.96px;font-size:20.8px;color:#1f1f1f;font-weight:normal;white-space:pre;">flcdmpe (...</div><div style="position:absolute;left:1711.5px;top:767.82px;height:24.96px;line-height:24.96px;font-size:20.8px;color:#1f1f1f;font-weight:normal;white-space:pre;">devstudi 1...</div><svg style="position:absolute;left:972px;top:802px;overflow:visible" width="24" height="22" viewBox="0 0 24 22"><rect x="1" y="1.5" width="21.5" height="19.5" rx="1" fill="#e3e3e3" opacity="0.55"/><path d="M0 1 Q0 0 1 0 L8.5 0 L10 2 L20.5 2 Q21.3 2 21.3 3 L21.3 6 L0 6 Z" fill="#dfa40c"/><path d="M0 3.5 L21.3 3.5 L21.3 19 Q21.3 20 20.3 20 L1 20 Q0 20 0 19 Z" fill="#fdbb12"/></svg><div style="position:absolute;left:1004px;top:801.37px;height:24.96px;line-height:24.96px;font-size:20.8px;color:#1f1f1f;font-weight:normal;white-space:pre;letter-spacing:0.2px">lib</div><div style="position:absolute;left:1315px;top:801.37px;height:24.96px;line-height:24.96px;font-size:20.8px;color:#1f1f1f;font-weight:normal;white-space:pre;letter-spacing:0.2px">Directory</div><div style="position:absolute;left:1437px;top:801.37px;height:24.96px;line-height:24.96px;font-size:20.8px;color:#1f1f1f;font-weight:normal;white-space:pre;">10/13/25 05:...</div><div style="position:absolute;left:1589.5px;top:801.37px;height:24.96px;line-height:24.96px;font-size:20.8px;color:#1f1f1f;font-weight:normal;white-space:pre;">flcdmpe (...</div><div style="position:absolute;left:1711.5px;top:801.37px;height:24.96px;line-height:24.96px;font-size:20.8px;color:#1f1f1f;font-weight:normal;white-space:pre;">devstudi 1...</div><svg style="position:absolute;left:972px;top:835px;overflow:visible" width="24" height="22" viewBox="0 0 24 22"><rect x="1" y="1.5" width="21.5" height="19.5" rx="1" fill="#e3e3e3" opacity="0.55"/><path d="M0 1 Q0 0 1 0 L8.5 0 L10 2 L20.5 2 Q21.3 2 21.3 3 L21.3 6 L0 6 Z" fill="#dfa40c"/><path d="M0 3.5 L21.3 3.5 L21.3 19 Q21.3 20 20.3 20 L1 20 Q0 20 0 19 Z" fill="#fdbb12"/></svg><div style="position:absolute;left:1004px;top:834.92px;height:24.96px;line-height:24.96px;font-size:20.8px;color:#1f1f1f;font-weight:normal;white-space:pre;letter-spacing:0.2px">prisma</div><div style="position:absolute;left:1315px;top:834.92px;height:24.96px;line-height:24.96px;font-size:20.8px;color:#1f1f1f;font-weight:normal;white-space:pre;letter-spacing:0.2px">Directory</div><div style="position:absolute;left:1437px;top:834.92px;height:24.96px;line-height:24.96px;font-size:20.8px;color:#1f1f1f;font-weight:normal;white-space:pre;">10/13/25 05:...</div><div style="position:absolute;left:1589.5px;top:834.92px;height:24.96px;line-height:24.96px;font-size:20.8px;color:#1f1f1f;font-weight:normal;white-space:pre;">flcdmpe (...</div><div style="position:absolute;left:1711.5px;top:834.92px;height:24.96px;line-height:24.96px;font-size:20.8px;color:#1f1f1f;font-weight:normal;white-space:pre;">devstudi 1...</div><svg style="position:absolute;left:972px;top:869px;overflow:visible" width="24" height="22" viewBox="0 0 24 22"><rect x="1" y="1.5" width="21.5" height="19.5" rx="1" fill="#e3e3e3" opacity="0.55"/><path d="M0 1 Q0 0 1 0 L8.5 0 L10 2 L20.5 2 Q21.3 2 21.3 3 L21.3 6 L0 6 Z" fill="#dfa40c"/><path d="M0 3.5 L21.3 3.5 L21.3 19 Q21.3 20 20.3 20 L1 20 Q0 20 0 19 Z" fill="#fdbb12"/></svg><div style="position:absolute;left:1004px;top:868.47px;height:24.96px;line-height:24.96px;font-size:20.8px;color:#1f1f1f;font-weight:normal;white-space:pre;letter-spacing:0.2px">public</div><div style="position:absolute;left:1315px;top:868.47px;height:24.96px;line-height:24.96px;font-size:20.8px;color:#1f1f1f;font-weight:normal;white-space:pre;letter-spacing:0.2px">Directory</div><div style="position:absolute;left:1437px;top:868.47px;height:24.96px;line-height:24.96px;font-size:20.8px;color:#1f1f1f;font-weight:normal;white-space:pre;">10/13/25 05:...</div><div style="position:absolute;left:1589.5px;top:868.47px;height:24.96px;line-height:24.96px;font-size:20.8px;color:#1f1f1f;font-weight:normal;white-space:pre;">flcdmpe (...</div><div style="position:absolute;left:1711.5px;top:868.47px;height:24.96px;line-height:24.96px;font-size:20.8px;color:#1f1f1f;font-weight:normal;white-space:pre;">devstudi 1...</div><svg style="position:absolute;left:972px;top:902px;overflow:visible" width="24" height="22" viewBox="0 0 24 22"><rect x="1" y="1.5" width="21.5" height="19.5" rx="1" fill="#e3e3e3" opacity="0.55"/><path d="M0 1 Q0 0 1 0 L8.5 0 L10 2 L20.5 2 Q21.3 2 21.3 3 L21.3 6 L0 6 Z" fill="#dfa40c"/><path d="M0 3.5 L21.3 3.5 L21.3 19 Q21.3 20 20.3 20 L1 20 Q0 20 0 19 Z" fill="#fdbb12"/></svg><div style="position:absolute;left:1004px;top:902.02px;height:24.96px;line-height:24.96px;font-size:20.8px;color:#1f1f1f;font-weight:normal;white-space:pre;letter-spacing:0.2px">src</div><div style="position:absolute;left:1315px;top:902.02px;height:24.96px;line-height:24.96px;font-size:20.8px;color:#1f1f1f;font-weight:normal;white-space:pre;letter-spacing:0.2px">Directory</div><div style="position:absolute;left:1437px;top:902.02px;height:24.96px;line-height:24.96px;font-size:20.8px;color:#1f1f1f;font-weight:normal;white-space:pre;">10/13/25 05:...</div><div style="position:absolute;left:1589.5px;top:902.02px;height:24.96px;line-height:24.96px;font-size:20.8px;color:#1f1f1f;font-weight:normal;white-space:pre;">flcdmpe (...</div><div style="position:absolute;left:1711.5px;top:902.02px;height:24.96px;line-height:24.96px;font-size:20.8px;color:#1f1f1f;font-weight:normal;white-space:pre;">devstudi 1...</div><svg style="position:absolute;left:972px;top:936px;overflow:visible" width="24" height="22" viewBox="0 0 24 22"><rect x="1" y="1.5" width="21.5" height="19.5" rx="1" fill="#e3e3e3" opacity="0.55"/><path d="M0 1 Q0 0 1 0 L8.5 0 L10 2 L20.5 2 Q21.3 2 21.3 3 L21.3 6 L0 6 Z" fill="#dfa40c"/><path d="M0 3.5 L21.3 3.5 L21.3 19 Q21.3 20 20.3 20 L1 20 Q0 20 0 19 Z" fill="#fdbb12"/></svg><div style="position:absolute;left:1004px;top:935.57px;height:24.96px;line-height:24.96px;font-size:20.8px;color:#1f1f1f;font-weight:normal;white-space:pre;letter-spacing:0.2px">tmp</div><div style="position:absolute;left:1315px;top:935.57px;height:24.96px;line-height:24.96px;font-size:20.8px;color:#1f1f1f;font-weight:normal;white-space:pre;letter-spacing:0.2px">Directory</div><div style="position:absolute;left:1437px;top:935.57px;height:24.96px;line-height:24.96px;font-size:20.8px;color:#1f1f1f;font-weight:normal;white-space:pre;">10/13/25 06:...</div><div style="position:absolute;left:1589.5px;top:935.57px;height:24.96px;line-height:24.96px;font-size:20.8px;color:#1f1f1f;font-weight:normal;white-space:pre;">flcdmpe (...</div><div style="position:absolute;left:1711.5px;top:935.57px;height:24.96px;line-height:24.96px;font-size:20.8px;color:#1f1f1f;font-weight:normal;white-space:pre;">devstudi 1...</div><svg style="position:absolute;left:974px;top:967px" width="21" height="26" viewBox="0 0 21 26"><path d="M1 1 L13.8 1 L19 6.2 L19 24 L1 24 Z" fill="#fff" stroke="#e3e3e3" stroke-width="1"/><rect x="15.3" y="6.8" width="3.2" height="16.7" fill="#ebebeb"/><rect x="1.5" y="21" width="17" height="2.5" fill="#ebebeb"/></svg><div style="position:absolute;left:1004px;top:969.12px;height:24.96px;line-height:24.96px;font-size:20.8px;color:#1f1f1f;font-weight:normal;white-space:pre;letter-spacing:0.2px">.env</div><div style="position:absolute;right:619px;top:969.12px;height:24.96px;line-height:24.96px;font-size:20.8px;color:#1f1f1f;font-weight:normal;white-space:pre;text-align:right;">921</div><div style="position:absolute;left:1315px;top:969.12px;height:24.96px;line-height:24.96px;font-size:20.8px;color:#1f1f1f;font-weight:normal;white-space:pre;letter-spacing:0.2px">File</div><div style="position:absolute;left:1437px;top:969.12px;height:24.96px;line-height:24.96px;font-size:20.8px;color:#1f1f1f;font-weight:normal;white-space:pre;">10/13/25 13:2...</div><div style="position:absolute;left:1589.5px;top:969.12px;height:24.96px;line-height:24.96px;font-size:20.8px;color:#1f1f1f;font-weight:normal;white-space:pre;">adfrw (06...</div><div style="position:absolute;left:1711.5px;top:969.12px;height:24.96px;line-height:24.96px;font-size:20.8px;color:#1f1f1f;font-weight:normal;white-space:pre;">devstudi 1...</div><svg style="position:absolute;left:974px;top:1000px" width="21" height="26" viewBox="0 0 21 26"><path d="M1 1 L13.8 1 L19 6.2 L19 24 L1 24 Z" fill="#fff" stroke="#e3e3e3" stroke-width="1"/><rect x="15.3" y="6.8" width="3.2" height="16.7" fill="#ebebeb"/><rect x="1.5" y="21" width="17" height="2.5" fill="#ebebeb"/></svg><div style="position:absolute;left:1004px;top:1002.67px;height:24.96px;line-height:24.96px;font-size:20.8px;color:#1f1f1f;font-weight:normal;white-space:pre;letter-spacing:0.2px">.gitignore</div><div style="position:absolute;right:619px;top:1002.67px;height:24.96px;line-height:24.96px;font-size:20.8px;color:#1f1f1f;font-weight:normal;white-space:pre;text-align:right;">503</div><div style="position:absolute;left:1315px;top:1002.67px;height:24.96px;line-height:24.96px;font-size:20.8px;color:#1f1f1f;font-weight:normal;white-space:pre;letter-spacing:0.2px">File</div><div style="position:absolute;left:1437px;top:1002.67px;height:24.96px;line-height:24.96px;font-size:20.8px;color:#1f1f1f;font-weight:normal;white-space:pre;">10/13/25 05:...</div><div style="position:absolute;left:1589.5px;top:1002.67px;height:24.96px;line-height:24.96px;font-size:20.8px;color:#1f1f1f;font-weight:normal;white-space:pre;">adfrw (06...</div><div style="position:absolute;left:1711.5px;top:1002.67px;height:24.96px;line-height:24.96px;font-size:20.8px;color:#1f1f1f;font-weight:normal;white-space:pre;">devstudi 1...</div><svg style="position:absolute;left:974px;top:1034px" width="21" height="26" viewBox="0 0 21 26"><path d="M1 1 L13.8 1 L19 6.2 L19 24 L1 24 Z" fill="#fff" stroke="#e3e3e3" stroke-width="1"/><rect x="15.3" y="6.8" width="3.2" height="16.7" fill="#ebebeb"/><rect x="1.5" y="21" width="17" height="2.5" fill="#ebebeb"/></svg><div style="position:absolute;left:1004px;top:1036.22px;height:24.96px;line-height:24.96px;font-size:20.8px;color:#1f1f1f;font-weight:normal;white-space:pre;letter-spacing:0.2px">README.md</div><div style="position:absolute;right:619px;top:1036.22px;height:24.96px;line-height:24.96px;font-size:20.8px;color:#1f1f1f;font-weight:normal;white-space:pre;text-align:right;">1450</div><div style="position:absolute;left:1315px;top:1036.22px;height:24.96px;line-height:24.96px;font-size:20.8px;color:#1f1f1f;font-weight:normal;white-space:pre;letter-spacing:0.2px">Markdown...</div><div style="position:absolute;left:1437px;top:1036.22px;height:24.96px;line-height:24.96px;font-size:20.8px;color:#1f1f1f;font-weight:normal;white-space:pre;">10/13/25 05:...</div><div style="position:absolute;left:1589.5px;top:1036.22px;height:24.96px;line-height:24.96px;font-size:20.8px;color:#1f1f1f;font-weight:normal;white-space:pre;">adfrw (06...</div><div style="position:absolute;left:1711.5px;top:1036.22px;height:24.96px;line-height:24.96px;font-size:20.8px;color:#1f1f1f;font-weight:normal;white-space:pre;">devstudi 1...</div><svg style="position:absolute;left:974px;top:1068px" width="21" height="26" viewBox="0 0 21 26"><path d="M1 1 L13.8 1 L19 6.2 L19 24 L1 24 Z" fill="#fff" stroke="#e3e3e3" stroke-width="1"/><rect x="15.3" y="6.8" width="3.2" height="16.7" fill="#ebebeb"/><rect x="1.5" y="21" width="17" height="2.5" fill="#ebebeb"/></svg><div style="position:absolute;left:1004px;top:1069.77px;height:24.96px;line-height:24.96px;font-size:20.8px;color:#1f1f1f;font-weight:normal;white-space:pre;letter-spacing:0.2px">components.json</div><div style="position:absolute;right:619px;top:1069.77px;height:24.96px;line-height:24.96px;font-size:20.8px;color:#1f1f1f;font-weight:normal;white-space:pre;text-align:right;">454</div><div style="position:absolute;left:1315px;top:1069.77px;height:24.96px;line-height:24.96px;font-size:20.8px;color:#1f1f1f;font-weight:normal;white-space:pre;letter-spacing:0.2px">JSON doc...</div><div style="position:absolute;left:1437px;top:1069.77px;height:24.96px;line-height:24.96px;font-size:20.8px;color:#1f1f1f;font-weight:normal;white-space:pre;">10/13/25 05:...</div><div style="position:absolute;left:1589.5px;top:1069.77px;height:24.96px;line-height:24.96px;font-size:20.8px;color:#1f1f1f;font-weight:normal;white-space:pre;">adfrw (06...</div><div style="position:absolute;left:1711.5px;top:1069.77px;height:24.96px;line-height:24.96px;font-size:20.8px;color:#1f1f1f;font-weight:normal;white-space:pre;">devstudi 1...</div><svg style="position:absolute;left:974px;top:1101px" width="21" height="26" viewBox="0 0 21 26"><path d="M1 1 L13.8 1 L19 6.2 L19 24 L1 24 Z" fill="#fff" stroke="#e3e3e3" stroke-width="1"/><rect x="15.3" y="6.8" width="3.2" height="16.7" fill="#ebebeb"/><rect x="1.5" y="21" width="17" height="2.5" fill="#ebebeb"/></svg><div style="position:absolute;left:1004px;top:1103.32px;height:24.96px;line-height:24.96px;font-size:20.8px;color:#1f1f1f;font-weight:normal;white-space:pre;letter-spacing:0.2px">eslint.config.mjs</div><div style="position:absolute;right:619px;top:1103.32px;height:24.96px;line-height:24.96px;font-size:20.8px;color:#1f1f1f;font-weight:normal;white-space:pre;text-align:right;">524</div><div style="position:absolute;left:1315px;top:1103.32px;height:24.96px;line-height:24.96px;font-size:20.8px;color:#1f1f1f;font-weight:normal;white-space:pre;letter-spacing:0.2px">JavaScrip...</div><div style="position:absolute;left:1437px;top:1103.32px;height:24.96px;line-height:24.96px;font-size:20.8px;color:#1f1f1f;font-weight:normal;white-space:pre;">10/13/25 05:...</div><div style="position:absolute;left:1589.5px;top:1103.32px;height:24.96px;line-height:24.96px;font-size:20.8px;color:#1f1f1f;font-weight:normal;white-space:pre;">adfrw (06...</div><div style="position:absolute;left:1711.5px;top:1103.32px;height:24.96px;line-height:24.96px;font-size:20.8px;color:#1f1f1f;font-weight:normal;white-space:pre;">devstudi 1...</div><svg style="position:absolute;left:974px;top:1135px" width="21" height="26" viewBox="0 0 21 26"><path d="M1 1 L13.8 1 L19 6.2 L19 24 L1 24 Z" fill="#fff" stroke="#e3e3e3" stroke-width="1"/><rect x="15.3" y="6.8" width="3.2" height="16.7" fill="#ebebeb"/><rect x="1.5" y="21" width="17" height="2.5" fill="#ebebeb"/></svg><div style="position:absolute;left:1004px;top:1136.87px;height:24.96px;line-height:24.96px;font-size:20.8px;color:#1f1f1f;font-weight:normal;white-space:pre;letter-spacing:0.2px">inflo.db.gz</div><div style="position:absolute;right:619px;top:1136.87px;height:24.96px;line-height:24.96px;font-size:20.8px;color:#1f1f1f;font-weight:normal;white-space:pre;text-align:right;">1695</div><div style="position:absolute;left:1315px;top:1136.87px;height:24.96px;line-height:24.96px;font-size:20.8px;color:#1f1f1f;font-weight:normal;white-space:pre;letter-spacing:0.2px">gz-file</div><div style="position:absolute;left:1437px;top:1136.87px;height:24.96px;line-height:24.96px;font-size:20.8px;color:#1f1f1f;font-weight:normal;white-space:pre;">10/13/25 05:...</div><div style="position:absolute;left:1589.5px;top:1136.87px;height:24.96px;line-height:24.96px;font-size:20.8px;color:#1f1f1f;font-weight:normal;white-space:pre;">adfrw (06...</div><div style="position:absolute;left:1711.5px;top:1136.87px;height:24.96px;line-height:24.96px;font-size:20.8px;color:#1f1f1f;font-weight:normal;white-space:pre;">devstudi 1...</div><svg style="position:absolute;left:974px;top:1168px" width="21" height="26" viewBox="0 0 21 26"><path d="M1 1 L13.8 1 L19 6.2 L19 24 L1 24 Z" fill="#fff" stroke="#e3e3e3" stroke-width="1"/><rect x="15.3" y="6.8" width="3.2" height="16.7" fill="#ebebeb"/><rect x="1.5" y="21" width="17" height="2.5" fill="#ebebeb"/></svg><div style="position:absolute;left:1004px;top:1170.42px;height:24.96px;line-height:24.96px;font-size:20.8px;color:#1f1f1f;font-weight:normal;white-space:pre;letter-spacing:0.2px">next-env.d.ts</div><div style="position:absolute;right:619px;top:1170.42px;height:24.96px;line-height:24.96px;font-size:20.8px;color:#1f1f1f;font-weight:normal;white-space:pre;text-align:right;">262</div><div style="position:absolute;left:1315px;top:1170.42px;height:24.96px;line-height:24.96px;font-size:20.8px;color:#1f1f1f;font-weight:normal;white-space:pre;letter-spacing:0.2px">TypeScrip...</div><div style="position:absolute;left:1437px;top:1170.42px;height:24.96px;line-height:24.96px;font-size:20.8px;color:#1f1f1f;font-weight:normal;white-space:pre;">10/13/25 05:...</div><div style="position:absolute;left:1589.5px;top:1170.42px;height:24.96px;line-height:24.96px;font-size:20.8px;color:#1f1f1f;font-weight:normal;white-space:pre;">adfrw (06...</div><div style="position:absolute;left:1711.5px;top:1170.42px;height:24.96px;line-height:24.96px;font-size:20.8px;color:#1f1f1f;font-weight:normal;white-space:pre;">devstudi 1...</div><svg style="position:absolute;left:974px;top:1202px" width="21" height="26" viewBox="0 0 21 26"><path d="M1 1 L13.8 1 L19 6.2 L19 24 L1 24 Z" fill="#fff" stroke="#e3e3e3" stroke-width="1"/><rect x="15.3" y="6.8" width="3.2" height="16.7" fill="#ebebeb"/><rect x="1.5" y="21" width="17" height="2.5" fill="#ebebeb"/></svg><div style="position:absolute;left:1004px;top:1203.97px;height:24.96px;line-height:24.96px;font-size:20.8px;color:#1f1f1f;font-weight:normal;white-space:pre;letter-spacing:0.2px">next.config.ts</div><div style="position:absolute;right:619px;top:1203.97px;height:24.96px;line-height:24.96px;font-size:20.8px;color:#1f1f1f;font-weight:normal;white-space:pre;text-align:right;">170</div><div style="position:absolute;left:1315px;top:1203.97px;height:24.96px;line-height:24.96px;font-size:20.8px;color:#1f1f1f;font-weight:normal;white-space:pre;letter-spacing:0.2px">TypeScrip...</div><div style="position:absolute;left:1437px;top:1203.97px;height:24.96px;line-height:24.96px;font-size:20.8px;color:#1f1f1f;font-weight:normal;white-space:pre;">10/13/25 12:5...</div><div style="position:absolute;left:1589.5px;top:1203.97px;height:24.96px;line-height:24.96px;font-size:20.8px;color:#1f1f1f;font-weight:normal;white-space:pre;">adfrw (06...</div><div style="position:absolute;left:1711.5px;top:1203.97px;height:24.96px;line-height:24.96px;font-size:20.8px;color:#1f1f1f;font-weight:normal;white-space:pre;">devstudi 1...</div><svg style="position:absolute;left:974px;top:1235px" width="21" height="26" viewBox="0 0 21 26"><path d="M1 1 L13.8 1 L19 6.2 L19 24 L1 24 Z" fill="#fff" stroke="#e3e3e3" stroke-width="1"/><rect x="15.3" y="6.8" width="3.2" height="16.7" fill="#ebebeb"/><rect x="1.5" y="21" width="17" height="2.5" fill="#ebebeb"/></svg><div style="position:absolute;left:1004px;top:1237.52px;height:24.96px;line-height:24.96px;font-size:20.8px;color:#1f1f1f;font-weight:normal;white-space:pre;letter-spacing:0.2px">package-lock.json</div><div style="position:absolute;right:619px;top:1237.52px;height:24.96px;line-height:24.96px;font-size:20.8px;color:#1f1f1f;font-weight:normal;white-space:pre;text-align:right;">264727</div><div style="position:absolute;left:1315px;top:1237.52px;height:24.96px;line-height:24.96px;font-size:20.8px;color:#1f1f1f;font-weight:normal;white-space:pre;letter-spacing:0.2px">JSON doc...</div><div style="position:absolute;left:1437px;top:1237.52px;height:24.96px;line-height:24.96px;font-size:20.8px;color:#1f1f1f;font-weight:normal;white-space:pre;">10/13/25 05:...</div><div style="position:absolute;left:1589.5px;top:1237.52px;height:24.96px;line-height:24.96px;font-size:20.8px;color:#1f1f1f;font-weight:normal;white-space:pre;">adfrw (06...</div><div style="position:absolute;left:1711.5px;top:1237.52px;height:24.96px;line-height:24.96px;font-size:20.8px;color:#1f1f1f;font-weight:normal;white-space:pre;">devstudi 1...</div><svg style="position:absolute;left:974px;top:1269px" width="21" height="26" viewBox="0 0 21 26"><path d="M1 1 L13.8 1 L19 6.2 L19 24 L1 24 Z" fill="#fff" stroke="#e3e3e3" stroke-width="1"/><rect x="15.3" y="6.8" width="3.2" height="16.7" fill="#ebebeb"/><rect x="1.5" y="21" width="17" height="2.5" fill="#ebebeb"/></svg><div style="position:absolute;left:1004px;top:1271.07px;height:24.96px;line-height:24.96px;font-size:20.8px;color:#1f1f1f;font-weight:normal;white-space:pre;letter-spacing:0.2px">package.json</div><div style="position:absolute;right:619px;top:1271.07px;height:24.96px;line-height:24.96px;font-size:20.8px;color:#1f1f1f;font-weight:normal;white-space:pre;text-align:right;">1523</div><div style="position:absolute;left:1315px;top:1271.07px;height:24.96px;line-height:24.96px;font-size:20.8px;color:#1f1f1f;font-weight:normal;white-space:pre;letter-spacing:0.2px">JSON doc...</div><div style="position:absolute;left:1437px;top:1271.07px;height:24.96px;line-height:24.96px;font-size:20.8px;color:#1f1f1f;font-weight:normal;white-space:pre;">10/13/25 12:5...</div><div style="position:absolute;left:1589.5px;top:1271.07px;height:24.96px;line-height:24.96px;font-size:20.8px;color:#1f1f1f;font-weight:normal;white-space:pre;">adfrw (06...</div><div style="position:absolute;left:1711.5px;top:1271.07px;height:24.96px;line-height:24.96px;font-size:20.8px;color:#1f1f1f;font-weight:normal;white-space:pre;">devstudi 1...</div><svg style="position:absolute;left:974px;top:1302px" width="21" height="26" viewBox="0 0 21 26"><path d="M1 1 L13.8 1 L19 6.2 L19 24 L1 24 Z" fill="#fff" stroke="#e3e3e3" stroke-width="1"/><rect x="15.3" y="6.8" width="3.2" height="16.7" fill="#ebebeb"/><rect x="1.5" y="21" width="17" height="2.5" fill="#ebebeb"/></svg><div style="position:absolute;left:1004px;top:1304.62px;height:24.96px;line-height:24.96px;font-size:20.8px;color:#1f1f1f;font-weight:normal;white-space:pre;letter-spacing:0.2px">postcss.config.mjs</div><div style="position:absolute;right:619px;top:1304.62px;height:24.96px;line-height:24.96px;font-size:20.8px;color:#1f1f1f;font-weight:normal;white-space:pre;text-align:right;">81</div><div style="position:absolute;left:1315px;top:1304.62px;height:24.96px;line-height:24.96px;font-size:20.8px;color:#1f1f1f;font-weight:normal;white-space:pre;letter-spacing:0.2px">JavaScrip...</div><div style="position:absolute;left:1437px;top:1304.62px;height:24.96px;line-height:24.96px;font-size:20.8px;color:#1f1f1f;font-weight:normal;white-space:pre;">10/13/25 05:...</div><div style="position:absolute;left:1589.5px;top:1304.62px;height:24.96px;line-height:24.96px;font-size:20.8px;color:#1f1f1f;font-weight:normal;white-space:pre;">adfrw (06...</div><div style="position:absolute;left:1711.5px;top:1304.62px;height:24.96px;line-height:24.96px;font-size:20.8px;color:#1f1f1f;font-weight:normal;white-space:pre;">devstudi 1...</div><svg style="position:absolute;left:974px;top:1336px" width="21" height="26" viewBox="0 0 21 26"><path d="M1 1 L13.8 1 L19 6.2 L19 24 L1 24 Z" fill="#fff" stroke="#e3e3e3" stroke-width="1"/><rect x="15.3" y="6.8" width="3.2" height="16.7" fill="#ebebeb"/><rect x="1.5" y="21" width="17" height="2.5" fill="#ebebeb"/></svg><div style="position:absolute;left:1004px;top:1338.17px;height:24.96px;line-height:24.96px;font-size:20.8px;color:#1f1f1f;font-weight:normal;white-space:pre;letter-spacing:0.2px">server.js</div><div style="position:absolute;right:619px;top:1338.17px;height:24.96px;line-height:24.96px;font-size:20.8px;color:#1f1f1f;font-weight:normal;white-space:pre;text-align:right;">580</div><div style="position:absolute;left:1315px;top:1338.17px;height:24.96px;line-height:24.96px;font-size:20.8px;color:#1f1f1f;font-weight:normal;white-space:pre;letter-spacing:0.2px">JavaScrip...</div><div style="position:absolute;left:1437px;top:1338.17px;height:24.96px;line-height:24.96px;font-size:20.8px;color:#1f1f1f;font-weight:normal;white-space:pre;">10/13/25 05:...</div><div style="position:absolute;left:1589.5px;top:1338.17px;height:24.96px;line-height:24.96px;font-size:20.8px;color:#1f1f1f;font-weight:normal;white-space:pre;">adfrw (06...</div><div style="position:absolute;left:1711.5px;top:1338.17px;height:24.96px;line-height:24.96px;font-size:20.8px;color:#1f1f1f;font-weight:normal;white-space:pre;">devstudi 1...</div><svg style="position:absolute;left:974px;top:1370px" width="21" height="26" viewBox="0 0 21 26"><path d="M1 1 L13.8 1 L19 6.2 L19 24 L1 24 Z" fill="#fff" stroke="#e3e3e3" stroke-width="1"/><rect x="15.3" y="6.8" width="3.2" height="16.7" fill="#ebebeb"/><rect x="1.5" y="21" width="17" height="2.5" fill="#ebebeb"/></svg><div style="position:absolute;left:1004px;top:1371.72px;height:24.96px;line-height:24.96px;font-size:20.8px;color:#1f1f1f;font-weight:normal;white-space:pre;letter-spacing:0.2px">stderr.log</div><div style="position:absolute;right:619px;top:1371.72px;height:24.96px;line-height:24.96px;font-size:20.8px;color:#1f1f1f;font-weight:normal;white-space:pre;text-align:right;">42363</div><div style="position:absolute;left:1315px;top:1371.72px;height:24.96px;line-height:24.96px;font-size:20.8px;color:#1f1f1f;font-weight:normal;white-space:pre;letter-spacing:0.2px">log-file</div><div style="position:absolute;left:1437px;top:1371.72px;height:24.96px;line-height:24.96px;font-size:20.8px;color:#1f1f1f;font-weight:normal;white-space:pre;">10/13/25 18:2...</div><div style="position:absolute;left:1589.5px;top:1371.72px;height:24.96px;line-height:24.96px;font-size:20.8px;color:#1f1f1f;font-weight:normal;white-space:pre;">adfrw (06...</div><div style="position:absolute;left:1711.5px;top:1371.72px;height:24.96px;line-height:24.96px;font-size:20.8px;color:#1f1f1f;font-weight:normal;white-space:pre;">devstudi 1...</div></div></div><div style="position:absolute;left:976px;top:1403.49px;height:25.02px;line-height:25.02px;font-size:20.85px;color:#222;font-weight:normal;white-space:pre;">14 files and 7 directories. Total size: 315875 bytes</div><div style="position:absolute;left:14.5px;top:1444.04px;height:21.12px;line-height:21.12px;font-size:17.6px;color:#262626;font-weight:normal;white-space:pre;">Server/Local file</div><div style="position:absolute;left:288.5px;top:1444.04px;height:21.12px;line-height:21.12px;font-size:17.6px;color:#262626;font-weight:normal;white-space:pre;">Direction</div><div style="position:absolute;left:380px;top:1444.04px;height:21.12px;line-height:21.12px;font-size:17.6px;color:#262626;font-weight:normal;white-space:pre;">Remote file</div><div style="position:absolute;right:1164px;top:1444.04px;height:21.12px;line-height:21.12px;font-size:17.6px;color:#262626;font-weight:normal;white-space:pre;text-align:right;">Size</div><div style="position:absolute;left:776.5px;top:1444.04px;height:21.12px;line-height:21.12px;font-size:17.6px;color:#262626;font-weight:normal;white-space:pre;">Priority</div><div style="position:absolute;left:868px;top:1444.04px;height:21.12px;line-height:21.12px;font-size:17.6px;color:#262626;font-weight:normal;white-space:pre;">Status</div><div style="position:absolute;left:277.5px;top:1445.4px;width:2px;height:17px;background:#e0e0e0"></div><div style="position:absolute;left:369.5px;top:1445.4px;width:2px;height:17px;background:#e0e0e0"></div><div style="position:absolute;left:644px;top:1445.4px;width:2px;height:17px;background:#e0e0e0"></div><div style="position:absolute;left:765.5px;top:1445.4px;width:2px;height:17px;background:#e0e0e0"></div><div style="position:absolute;left:857px;top:1445.4px;width:2px;height:17px;background:#e0e0e0"></div><div style="position:absolute;left:1086.5px;top:1445.4px;width:2px;height:17px;background:#e0e0e0"></div><div style="position:absolute;left:0px;top:1505px;width:1920px;height:42px;background:linear-gradient(#f3f3f3,#ebebeb 40%,#dedede)"></div><div style="position:absolute;left:0px;top:1546px;width:1920px;height:1px;background:#c6c6c6"></div><div style="position:absolute;left:162.5px;top:1509px;width:178px;height:32px;background:linear-gradient(#e9e9e9,#e4e4e4 45%,#d9d9d9 55%,#dcdcdc);border:1px solid #b3b3b3;border-radius:0 0 4px 4px"></div><div style="position:absolute;left:341px;top:1509px;width:229px;height:32px;background:linear-gradient(#e9e9e9,#e4e4e4 45%,#d9d9d9 55%,#dcdcdc);border:1px solid #b3b3b3;border-radius:0 0 4px 4px"></div><div style="position:absolute;left:4px;top:1508px;width:10px;height:34px;background:linear-gradient(#e8e8e8,#dedede);border-top:1px solid #b3b3b3"></div><div style="position:absolute;left:12.5px;top:1506px;width:150px;height:35px;background:linear-gradient(#fbfbfb,#f6f6f6 50%,#ececec);border:1px solid #b3b3b3;border-top:none;border-radius:0 0 4px 4px"></div><div style="position:absolute;left:25px;top:1510.32px;height:24.36px;line-height:24.36px;font-size:20.3px;color:#1e1e1e;font-weight:bold;white-space:pre;">Queued files</div><div style="position:absolute;left:174.5px;top:1510.50px;height:24.60px;line-height:24.60px;font-size:20.5px;color:#262626;font-weight:normal;white-space:pre;">Failed transfers</div><div style="position:absolute;left:352.5px;top:1509.96px;height:25.08px;line-height:25.08px;font-size:20.9px;color:#262626;font-weight:normal;white-space:pre;">Successful transfers</div><svg style="position:absolute;left:0;top:0;pointer-events:none" width="1920" height="1592" viewBox="0 0 1920 1592"><path d="M1578.2 1565.5 L1578.2 1563.5 A6.8 6.8 0 0 1 1591.8 1563.5 L1591.8 1565.5" stroke="#666" stroke-width="2.8" fill="none"/><rect x="1574" y="1564.7" width="22" height="13" rx="1" fill="#fdbb12"/><rect x="1585" y="1564.7" width="11" height="13" fill="#e6a812"/><circle cx="1585" cy="1570" r="1.8" fill="#3b4a6b"/><rect x="1584" y="1570" width="2" height="4.5" fill="#3b4a6b"/><rect x="1611.8" y="1555.6" width="4.4" height="5" transform="rotate(22.5 1614 1566.7)" fill="#555"/><rect x="1611.8" y="1555.6" width="4.4" height="5" transform="rotate(67.5 1614 1566.7)" fill="#555"/><rect x="1611.8" y="1555.6" width="4.4" height="5" transform="rotate(112.5 1614 1566.7)" fill="#555"/><rect x="1611.8" y="1555.6" width="4.4" height="5" transform="rotate(157.5 1614 1566.7)" fill="#555"/><rect x="1611.8" y="1555.6" width="4.4" height="5" transform="rotate(202.5 1614 1566.7)" fill="#555"/><rect x="1611.8" y="1555.6" width="4.4" height="5" transform="rotate(247.5 1614 1566.7)" fill="#555"/><rect x="1611.8" y="1555.6" width="4.4" height="5" transform="rotate(292.5 1614 1566.7)" fill="#555"/><rect x="1611.8" y="1555.6" width="4.4" height="5" transform="rotate(337.5 1614 1566.7)" fill="#555"/><circle cx="1614" cy="1566.7" r="8.6" fill="#555"/><circle cx="1614" cy="1566.7" r="6.3" fill="#fff"/><text x="1614" y="1571" text-anchor="middle" font-family="Liberation Sans" font-weight="bold" font-size="12" fill="#22bb22">A</text><circle cx="1643.2" cy="1567" r="10.3" fill="#fff" stroke="#555" stroke-width="2"/><path d="M1637 1573 A7.2 7.2 0 1 1 1649.5 1573" stroke="#8a8a8a" stroke-width="2.6" fill="none"/><line x1="1642" y1="1567.5" x2="1648" y2="1561.5" stroke="#444" stroke-width="1.6"/><defs><radialGradient id="lg" cx="0.5" cy="0.3" r="0.6"><stop offset="0" stop-color="#8fdc8f"/><stop offset="0.3" stop-color="#3aa83a"/><stop offset="0.55" stop-color="#333"/><stop offset="1" stop-color="#121212"/></radialGradient><radialGradient id="lr" cx="0.5" cy="0.3" r="0.6"><stop offset="0" stop-color="#e8a090"/><stop offset="0.3" stop-color="#b8502a"/><stop offset="0.55" stop-color="#333"/><stop offset="1" stop-color="#121212"/></radialGradient></defs><circle cx="1874" cy="1566.8" r="7.2" fill="url(#lg)" stroke="#e8e8e8" stroke-width="0.8"/><circle cx="1896.8" cy="1566.8" r="7.2" fill="url(#lr)" stroke="#e8e8e8" stroke-width="0.8"/></svg><div style="position:absolute;left:1672.5px;top:1558.08px;height:21.24px;line-height:21.24px;font-size:17.7px;color:#262626;font-weight:normal;white-space:pre;">Queue: empty</div><div style="position:absolute;left:4px;top:2px;width:1914px;height:1588px;border-radius:11px;border:1px solid #b6b6b6;box-shadow:0 0 0 60px #e8e8e8;pointer-events:none"></div><div style="position:absolute;left:0px;top:0px;width:4px;height:1592px;background:#cdcdcd"></div><div style="position:absolute;left:0px;top:0px;width:1920px;height:2px;background:#e4e4e4"></div><div style="position:absolute;left:536px;top:0px;width:1px;height:2px;background:#555"></div><div style="position:absolute;left:555px;top:0px;width:46px;height:2px;background:#3a3a3a"></div><div style="position:absolute;left:1918px;top:0px;width:2px;height:1592px;background:#d0d0d0"></div><div style="position:absolute;left:0px;top:1590px;width:1920px;height:2px;background:#d0d0d0"></div><div style="position:absolute;left:978px;top:189px;width:418px;height:36px;border:2px solid #ff200f;"></div><div style="position:absolute;left:987px;top:191.60px;height:30.00px;line-height:30.00px;font-size:25px;color:#ff200f;font-weight:normal;white-space:pre;letter-spacing:-0.3px">Lokasi data-data aplikasi web berada</div><div style="position:absolute;left:1099px;top:281px;width:289px;height:42px;border:2px solid #ff200f;"></div><div style="position:absolute;left:249px;top:537px;width:647px;height:36px;border:2px solid #ff200f;background:#fff;"></div><div style="position:absolute;left:258.8px;top:540.40px;height:30.00px;line-height:30.00px;font-size:25px;color:#ff200f;font-weight:normal;white-space:pre;letter-spacing:-0.26px">Folder ini di transfer ke berbeda lokasi / folder pada server</div><div style="position:absolute;left:4px;top:766.5px;width:184px;height:37.5px;border:2px solid #ff200f;"></div><div style="position:absolute;left:764px;top:799px;width:183px;height:146.5px;border:3px solid #ff200f;"></div><div style="position:absolute;left:358.29999999999995px;width:1000px;top:807.50px;height:30.00px;line-height:30.00px;font-size:25px;color:#ff200f;font-weight:normal;white-space:pre;text-align:center;letter-spacing:-0.3px">Drag and drop</div><div style="position:absolute;left:358.29999999999995px;width:1000px;top:836.10px;height:30.00px;line-height:30.00px;font-size:25px;color:#ff200f;font-weight:normal;white-space:pre;text-align:center;letter-spacing:-0.3px">ke server</div><div style="position:absolute;left:358.29999999999995px;width:1000px;top:873.10px;height:30.00px;line-height:30.00px;font-size:25px;color:#ff200f;font-weight:normal;white-space:pre;text-align:center;letter-spacing:-0.3px">Kecuali folder</div><div style="position:absolute;left:358.29999999999995px;width:1000px;top:902.30px;height:30.00px;line-height:30.00px;font-size:25px;color:#ff200f;font-weight:normal;white-space:pre;text-align:center;letter-spacing:-0.3px">node_modules</div><svg style="position:absolute;left:0;top:0;pointer-events:none" width="1920" height="1592" viewBox="0 0 1920 1592"><line x1="1194" y1="222.5" x2="1209.5" y2="267.5" stroke="#ff200f" stroke-width="1.6"/><path d="M1211.6 273.7 L1205.6 268.2 L1213.2 265.8 Z" fill="#ff200f"/><path d="M346.8 571.5 C342.47 576.25 329.64 589.83 320.8 600 C311.96 610.17 301.80 622.22 293.75 632.5 C285.70 642.78 279.51 652.12 272.5 661.7 C265.49 671.28 259.08 679.42 251.7 690 C244.32 700.58 234.25 715.57 228.2 725.2 C222.15 734.83 219.28 740.88 215.4 747.8 C211.52 754.72 208.05 761.42 204.9 766.7 C201.75 771.98 197.90 777.37 196.5 779.5" stroke="#ff200f" stroke-width="1.7" fill="none"/><path d="M193 784.8 L193.3 776 L201 780.5 Z" fill="#ff200f"/><rect x="780.8" y="1005.5" width="141" height="3.4" fill="#ff200f"/><path d="M920 999.6 L934 1007.2 L920 1014.8000000000001 Z" fill="#ff200f"/><rect x="780.8" y="1036.6" width="141" height="3.4" fill="#ff200f"/><path d="M920 1030.7 L934 1038.3 L920 1045.8999999999999 Z" fill="#ff200f"/></svg>
</body></html>
